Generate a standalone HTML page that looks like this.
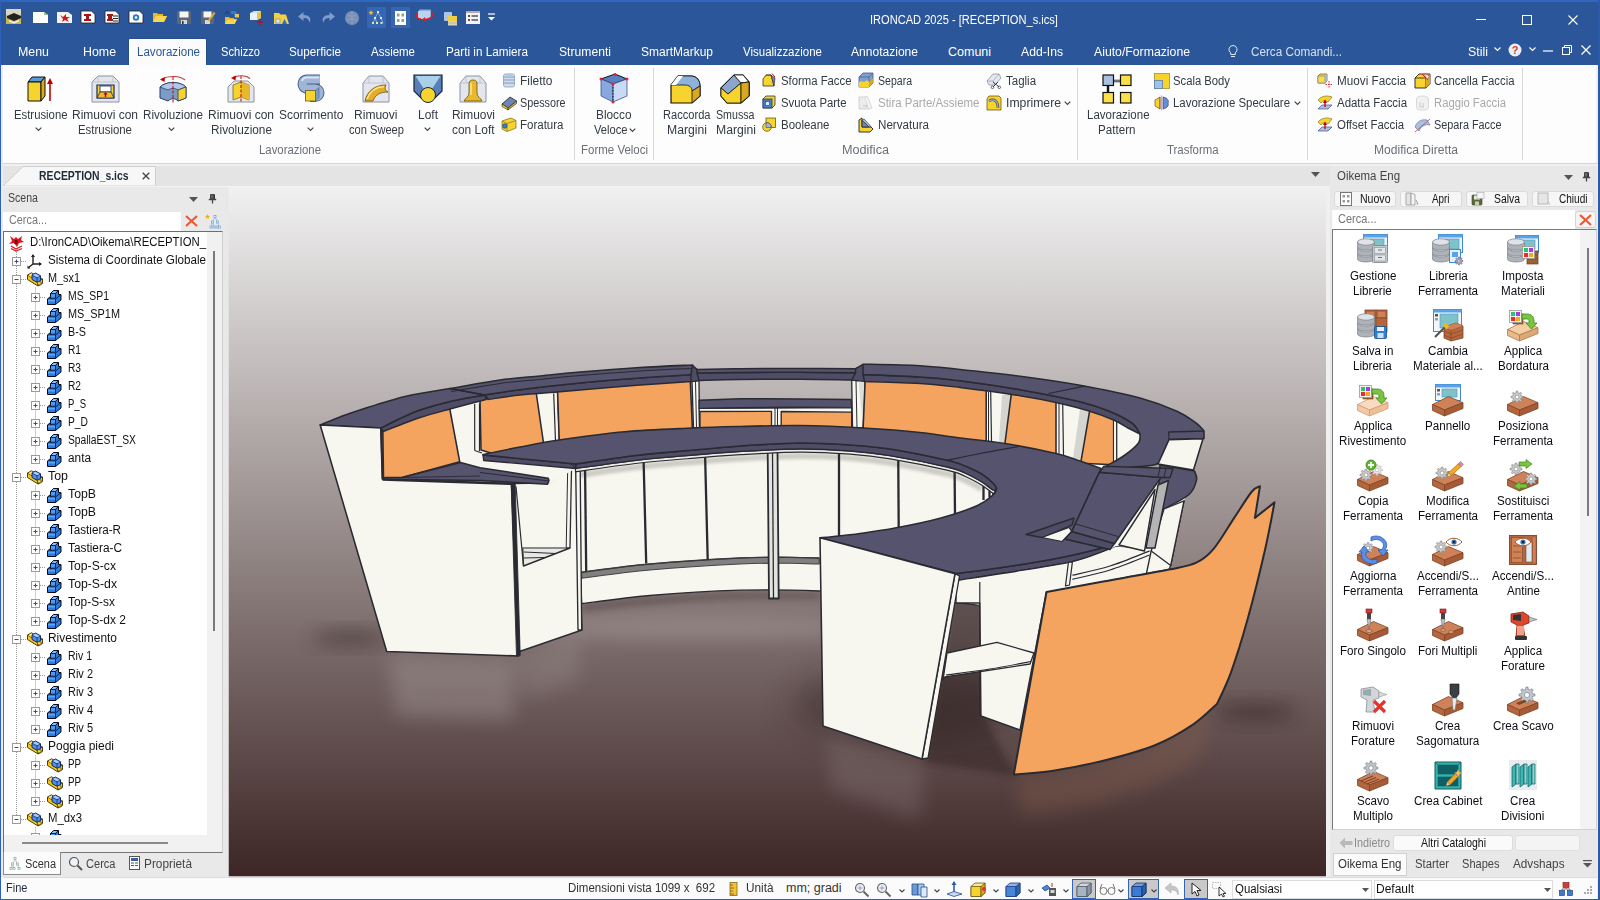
<!DOCTYPE html>
<html lang="it"><head><meta charset="utf-8"><title>IRONCAD 2025 - [RECEPTION_s.ics]</title><style>
html,body{margin:0;padding:0;}
body{width:1600px;height:900px;overflow:hidden;position:relative;background:#f0f0f0;font-family:"Liberation Sans",sans-serif;font-size:12px;}
.b{position:absolute;box-sizing:border-box;}
.t{position:absolute;white-space:pre;line-height:16px;transform-origin:0 50%;}
svg{overflow:visible;}
</style></head><body>
<!-- g_top -->
<div class="b" style="left:0px;top:0px;width:1600px;height:65px;background:#2b579a;"></div><div class="b" style="left:0px;top:0px;width:1600px;height:2px;background:#2f66c0;"></div><svg class="b" style="left:6px;top:9px;" width="15" height="15" viewBox="0 0 15 15"><rect width="15" height="15" fill="#c9b458"/><path d="M0 0H15V6L7 9 0 6Z" fill="#d9d6c6"/><path d="M1 7L8 4 15 7V9L8 12 1 9Z" fill="#222"/><path d="M3 11L8 13 13 11V12.5L8 14.5 3 12.5Z" fill="#f4f4f0"/></svg><svg class="b" style="left:32.5px;top:11.5px;" width="15" height="11" viewBox="0 0 15 11"><path d="M0 0H11L15 3V11H0Z" fill="#fff"/><path d="M11 0L15 3H11Z" fill="#9fc08a"/></svg><svg class="b" style="left:56.5px;top:11.5px;" width="15" height="11" viewBox="0 0 15 11"><path d="M0 0H11L15 3V11H0Z" fill="#f3f3f3"/><path d="M3 3L6 5 9 2 9 5 13 5 10 7 12 10 8 8 5 10 6 7Z" fill="#d2161d"/></svg><svg class="b" style="left:81px;top:11px;" width="14" height="12" viewBox="0 0 14 12"><path d="M0 0H10.5L14 3.5V12H0Z" fill="#fff" stroke="#222" stroke-width="0.8"/><path d="M3 3H10V5H8V8H10V10H3V8H5V5H3Z" fill="#a3161a"/></svg><svg class="b" style="left:104.5px;top:11px;" width="14" height="12" viewBox="0 0 14 12"><path d="M0 0H10.5L14 3.5V12H0Z" fill="#fff" stroke="#222" stroke-width="0.8"/><path d="M2 3H8V5H7V8H8V10H2V8H3V5H2Z" fill="#a3161a"/><path d="M8 5H13M8 7.5H13M8 10H13" stroke="#222" stroke-width="1.2"/></svg><svg class="b" style="left:128.5px;top:11px;" width="14" height="12" viewBox="0 0 14 12"><path d="M0 0H10.5L14 3.5V12H0Z" fill="#fff" stroke="#222" stroke-width="0.8"/><circle cx="7" cy="6.5" r="3.2" fill="#2a7bc4"/><circle cx="7" cy="6.5" r="1.3" fill="#fff"/></svg><svg class="b" style="left:152.5px;top:12px;" width="14" height="10" viewBox="0 0 14 10"><path d="M0 10V1H4L5 2H10V4H14L11 10Z" fill="#e7b928"/><path d="M0 10L3 4H14L11 10Z" fill="#f6d653"/></svg><svg class="b" style="left:177px;top:11px;" width="14" height="13" viewBox="0 0 14 13"><rect width="14" height="13" rx="1" fill="#5c6674"/><rect x="2.5" y="0.5" width="9" height="6" fill="#f4f6f8"/><rect x="4" y="9" width="6" height="4" fill="#d5d9de"/><rect x="5" y="10" width="1.6" height="3" fill="#333"/></svg><svg class="b" style="left:201px;top:11px;" width="14" height="13" viewBox="0 0 14 13"><rect width="13" height="13" rx="1" fill="#5c6674"/><rect x="2.5" y="0.5" width="8" height="6" fill="#f4f6f8"/><rect x="4" y="9" width="5" height="4" fill="#d5d9de"/><path d="M7 9L13 1 14.5 2.2 8.5 10 6.5 10.5Z" fill="#e8a93a"/></svg><svg class="b" style="left:224px;top:10px;" width="15" height="14" viewBox="0 0 15 14"><path d="M1 14V7H5L6 8H10V9H13L10.5 14Z" fill="#e7b928"/><path d="M1 14L3.5 9.5H13L10.5 14Z" fill="#f6d653"/><path d="M7 1H11L13 3V7H10V4H7Z" fill="#3b78c9"/><rect x="11" y="4" width="4" height="3.5" fill="#e6c648"/><path d="M1 4L3 1.5 5 4" fill="none" stroke="#1b3f8a" stroke-width="1.2"/></svg><svg class="b" style="left:248px;top:10px;" width="16" height="15" viewBox="0 0 16 15"><path d="M2 3L6 1H13V8L9 10H2Z" fill="#cfe3f6"/><path d="M2 3H9V10H2Z" fill="#e9f3fc"/><path d="M9 3L13 1V8L9 10Z" fill="#e5c34c"/><path d="M9 12H15M12 9V15" stroke="#b2122a" stroke-width="1.3"/></svg><svg class="b" style="left:274px;top:11px;" width="15" height="13" viewBox="0 0 15 13"><path d="M0 13V2H5L6.5 3.5H12L15 13Z" fill="#f3d13f"/><rect x="2" y="8" width="4" height="4" fill="#dfe6f4" stroke="#7286ad" stroke-width="0.6"/><path d="M8 13L10.5 8 13 13Z" fill="#2a6fd1"/></svg><svg class="b" style="left:298px;top:12px;" width="14" height="11" viewBox="0 0 14 11"><path d="M5.5 0L0 4.5 5.5 9V6C9 6 11 7 11.5 11 14 6 11 3 5.5 3Z" fill="#7f9ccb"/></svg><svg class="b" style="left:320.5px;top:12px;" width="14" height="11" viewBox="0 0 14 11"><path d="M8.500 0L14 4.5 8.500 9V6C5 6 3 7 2.500 11 0 6 3 3 8.500 3Z" fill="#7f9ccb"/></svg><svg class="b" style="left:345px;top:10.5px;" width="14" height="14" viewBox="0 0 14 14"><circle cx="7" cy="7" r="7" fill="#7a8fb5"/><path d="M3 4Q7 7 11 4M2 9Q7 6 12 9M7 0V14" stroke="#8fa3c6" stroke-width="0.8" fill="none"/></svg><div class="b" style="left:367px;top:7px;width:19px;height:21px;background:#3566b3;"></div><svg class="b" style="left:369px;top:10px;" width="16" height="15" viewBox="0 0 16 15"><path d="M2 0L2.700 1.800 4.500 2 3.100 3.200 3.500 5 2 4 0.500 5 0.900 3.200 -0.500 2 1.300 1.800Z" fill="#f0c23a"/><path d="M9 2.500L6 8M9 2.500L12 8M6 8L4 13M6 8L8 13M12 8L14 13" stroke="#9fc3ec" stroke-width="0.7"/><rect x="8" y="1" width="2" height="2" fill="#dbeaf9"/><rect x="5" y="7" width="2" height="2" fill="#dbeaf9"/><rect x="11" y="7" width="2" height="2" fill="#dbeaf9"/><rect x="3" y="12" width="2" height="2" fill="#f0e68a"/><rect x="7" y="12" width="2" height="2" fill="#f0e68a"/><rect x="11.500" y="12" width="2" height="2" fill="#f0e68a"/></svg><div class="b" style="left:391px;top:7px;width:19px;height:21px;background:#3566b3;"></div><svg class="b" style="left:394.5px;top:10.5px;" width="11" height="14" viewBox="0 0 11 14"><rect width="11" height="14" fill="#fdfdfd"/><rect x="2" y="2.500" width="2.500" height="3" fill="#9a9a9a"/><rect x="6.500" y="2.500" width="2.500" height="3" fill="#9a9a9a"/><rect x="2" y="8" width="2.500" height="3" fill="#9a9a9a"/><rect x="6.500" y="8" width="2.500" height="3" fill="#9a9a9a"/></svg><svg class="b" style="left:416px;top:9px;" width="17" height="13" viewBox="0 0 17 13"><rect x="3" y="0.500" width="12" height="9" rx="1" fill="#8fb0d8"/><rect x="2" y="2" width="12" height="8" fill="#bcd3ee"/><path d="M1 4C-1 8 2 10 5 10M16 4C18 7 14 10.500 8 10.500" stroke="#e01b24" stroke-width="1.400" fill="none"/><path d="M9 8L6 10.500 9 13Z" fill="#e01b24"/></svg><svg class="b" style="left:444px;top:11.5px;" width="13" height="14" viewBox="0 0 13 14"><rect x="0" y="0" width="8" height="9" rx="1" fill="#a9c6e8"/><rect x="4" y="4" width="9" height="5" fill="#f0cf45"/><rect x="4" y="9" width="9" height="4.500" fill="#d9d4c0"/><path d="M4 11H13" stroke="#b4ad92" stroke-width="0.700"/></svg><svg class="b" style="left:465.5px;top:10.5px;" width="14" height="13" viewBox="0 0 14 13"><rect width="14" height="13" fill="#f4f4f4"/><rect width="14" height="2" fill="#b9a9a9"/><rect x="2" y="4" width="2" height="2" fill="#555"/><rect x="2" y="8" width="2" height="2" fill="#555"/><path d="M5.500 5H12M5.500 9H12" stroke="#555" stroke-width="1.300"/></svg><svg class="b" style="left:488px;top:14px;" width="7" height="7" viewBox="0 0 7 7"><path d="M0 0H7" stroke="#fff" stroke-width="1.200"/><path d="M0 3H7L3.500 6.500Z" fill="#fff"/></svg><span class="t" style="left:870.0px;top:11.7px;font-size:12.5px;color:#fff;transform:scaleX(0.887);">IRONCAD 2025 - [RECEPTION_s.ics]</span><svg class="b" style="left:1475px;top:13px;" width="12" height="12" viewBox="0 0 12 12"><path d="M1 6.500H11" stroke="#fff" stroke-width="1"/></svg><svg class="b" style="left:1521px;top:14px;" width="12" height="12" viewBox="0 0 12 12"><rect x="1.500" y="1.500" width="9" height="9" fill="none" stroke="#fff" stroke-width="1"/></svg><svg class="b" style="left:1567px;top:14px;" width="12" height="12" viewBox="0 0 12 12"><path d="M1.500 1.500L10.500 10.500M10.500 1.500L1.500 10.500" stroke="#fff" stroke-width="1.100"/></svg><div class="b" style="left:129px;top:39px;width:77px;height:27px;background:#fbfbfb;border-radius:1px 1px 0 0;box-shadow:0 0 2px rgba(0,0,0,.35);"></div><span class="t" style="left:18.0px;top:44.0px;font-size:12.5px;color:#fff;transform:scaleX(0.992);">Menu</span><span class="t" style="left:83.0px;top:44.0px;font-size:12.5px;color:#fff;transform:scaleX(0.990);">Home</span><span class="t" style="left:137.0px;top:44.0px;font-size:12.5px;color:#2b579a;transform:scaleX(0.925);">Lavorazione</span><span class="t" style="left:221.0px;top:44.0px;font-size:12.5px;color:#fff;transform:scaleX(0.891);">Schizzo</span><span class="t" style="left:289.0px;top:44.0px;font-size:12.5px;color:#fff;transform:scaleX(0.936);">Superficie</span><span class="t" style="left:371.0px;top:44.0px;font-size:12.5px;color:#fff;transform:scaleX(0.918);">Assieme</span><span class="t" style="left:446.0px;top:44.0px;font-size:12.5px;color:#fff;transform:scaleX(0.937);">Parti in Lamiera</span><span class="t" style="left:559.0px;top:44.0px;font-size:12.5px;color:#fff;transform:scaleX(0.972);">Strumenti</span><span class="t" style="left:641.0px;top:44.0px;font-size:12.5px;color:#fff;transform:scaleX(0.960);">SmartMarkup</span><span class="t" style="left:743.0px;top:44.0px;font-size:12.5px;color:#fff;transform:scaleX(0.919);">Visualizzazione</span><span class="t" style="left:851.0px;top:44.0px;font-size:12.5px;color:#fff;transform:scaleX(0.964);">Annotazione</span><span class="t" style="left:948.0px;top:44.0px;font-size:12.5px;color:#fff;">Comuni</span><span class="t" style="left:1021.0px;top:44.0px;font-size:12.5px;color:#fff;transform:scaleX(0.975);">Add-Ins</span><span class="t" style="left:1094.0px;top:44.0px;font-size:12.5px;color:#fff;transform:scaleX(0.980);">Aiuto/Formazione</span><svg class="b" style="left:1227px;top:44px;" width="12" height="15" viewBox="0 0 12 15"><path d="M6 1.500A4 4 0 0 1 8.300 8.800V10.500H3.700V8.800A4 4 0 0 1 6 1.500Z" fill="none" stroke="#dfe8f5" stroke-width="1"/><path d="M4 12.500H8" stroke="#dfe8f5" stroke-width="1"/></svg><span class="t" style="left:1251.0px;top:44.0px;font-size:12.5px;color:#d5e0f2;transform:scaleX(0.936);">Cerca Comandi...</span><span class="t" style="left:1468.0px;top:44.0px;font-size:12.5px;color:#fff;transform:scaleX(0.993);">Stili</span><svg class="b" style="left:1494px;top:47px;" width="7" height="5" viewBox="0 0 7 5"><path d="M0.500 0.500L3.500 3.500 6.500 0.500" stroke="#fff" stroke-width="1.200" fill="none"/></svg><svg class="b" style="left:1508px;top:43px;" width="14" height="14" viewBox="0 0 14 14"><circle cx="7" cy="7" r="6.500" fill="#e9eef7"/><text x="7" y="10.800" font-size="11" font-weight="bold" fill="#e5352b" text-anchor="middle" font-family="Liberation Sans, sans-serif">?</text></svg><svg class="b" style="left:1529px;top:47px;" width="7" height="5" viewBox="0 0 7 5"><path d="M0.500 0.500L3.500 3.500 6.500 0.500" stroke="#fff" stroke-width="1.200" fill="none"/></svg><svg class="b" style="left:1543px;top:46px;" width="10" height="10" viewBox="0 0 10 10"><path d="M0 5H10" stroke="#fff" stroke-width="1.200"/></svg><svg class="b" style="left:1562px;top:45px;" width="11" height="11" viewBox="0 0 11 11"><rect x="0.500" y="2.500" width="7" height="7" fill="none" stroke="#fff" stroke-width="1"/><path d="M2.500 2.500V0.500H9.500V7.500H7.500" fill="none" stroke="#fff" stroke-width="1"/></svg><svg class="b" style="left:1581px;top:45px;" width="10" height="10" viewBox="0 0 10 10"><path d="M0.500 0.500L9.500 9.500M9.500 0.500L0.500 9.500" stroke="#fff" stroke-width="1.300"/></svg>
<!-- g_ribbon -->
<div class="b" style="left:3px;top:65px;width:1593px;height:98px;background:#fdfdfd;"></div><div class="b" style="left:3px;top:163px;width:1594px;height:1px;background:#d4d4d4;"></div><div class="b" style="left:574px;top:68px;width:1px;height:92px;background:#d8d8d8;"></div><div class="b" style="left:653px;top:68px;width:1px;height:92px;background:#d8d8d8;"></div><div class="b" style="left:1077px;top:68px;width:1px;height:92px;background:#d8d8d8;"></div><div class="b" style="left:1307px;top:68px;width:1px;height:92px;background:#d8d8d8;"></div><div class="b" style="left:1522px;top:68px;width:1px;height:92px;background:#d8d8d8;"></div><svg class="b" style="left:27px;top:76px;" width="26" height="26" viewBox="0 0 26 26"><path d="M1 6L5 1H18L14 6Z" fill="#5b9bd5" stroke="#111" stroke-width="1"/><path d="M1 6H14V25H1Z" fill="#f6d32d" stroke="#111" stroke-width="1"/><path d="M14 6L18 1V20L14 25Z" fill="#d9a820" stroke="#111" stroke-width="1"/><path d="M23 25V6" stroke="#c00000" stroke-width="1.600"/><path d="M20 8L23 2 26 8Z" fill="#c00000"/></svg><svg class="b" style="left:91px;top:75px;" width="29" height="28" viewBox="0 0 29 28"><path d="M1 27V7L7 1H22L28 7V27Z" fill="#e3e6ee" stroke="#8d929c" stroke-width="1"/><path d="M1 7H28M7 1V7M22 1V7" stroke="#b7bcc6" stroke-width="0.800"/><path d="M6 23V10H23V23Z" fill="#f6d32d" stroke="#1a2a55" stroke-width="1.200"/><rect x="9" y="11" width="11" height="6" fill="#fff" stroke="#1a2a55" stroke-width="0.800"/><path d="M6 23L9 17H20L23 23Z" fill="#f3b928" stroke="#1a2a55" stroke-width="0.800"/><path d="M14.500 22V18" stroke="#c00000" stroke-width="1.400"/><path d="M12.500 19.500L14.500 17 16.500 19.500Z" fill="#c00000"/></svg><svg class="b" style="left:158px;top:76px;" width="30" height="27" viewBox="0 0 30 27"><path d="M2 11C8 5 22 5 28 11V22L20 25C17 22 13 22 10 25L2 22Z" fill="#7c9cc6" stroke="#2a3d66" stroke-width="1"/><path d="M2 11C8 5 22 5 28 11L20 14C17 12 13 12 10 14Z" fill="#b3c8e6" stroke="#2a3d66" stroke-width="0.800"/><path d="M20 14L28 11V22L20 25Z" fill="#f6d32d" stroke="#2a3d66" stroke-width="0.800"/><path d="M15 1V27" stroke="#c00000" stroke-width="1" stroke-dasharray="3 1.500"/><path d="M27 4C22 -0.500 10 -0.500 4 3" fill="none" stroke="#c03a3a" stroke-width="1.200"/><path d="M2 3.500L7 1 6.500 6Z" fill="#c00000"/></svg><svg class="b" style="left:227px;top:75px;" width="28" height="28" viewBox="0 0 28 28"><path d="M1 27V12L7 6H21L27 12V27Z" fill="#e3e6ee" stroke="#8d929c" stroke-width="1"/><path d="M6 25V10L14 7 22 10V25L14 22Z" fill="#f6d32d" stroke="#7a6a20" stroke-width="0.800"/><path d="M14 7L22 10V25L14 22Z" fill="#e6b82c"/><path d="M14 1V27" stroke="#c00000" stroke-width="1" stroke-dasharray="3 1.500"/><path d="M23 3.500C19 0 11 0 6 2.500" fill="none" stroke="#c03a3a" stroke-width="1.200"/><path d="M4 3L9 0.500 8.500 5.500Z" fill="#c00000"/></svg><svg class="b" style="left:296px;top:74px;" width="30" height="29" viewBox="0 0 30 29"><path d="M24 5.500H11C5 5.500 5 14.500 11 14.500H19C25 14.500 25 23 19 23H14" fill="none" stroke="#4a5f86" stroke-width="10" stroke-linejoin="round"/><path d="M24 5.500H11C5 5.500 5 14.500 11 14.500H19C25 14.500 25 23 19 23H14" fill="none" stroke="#9fb6d8" stroke-width="8" stroke-linejoin="round"/><path d="M23 3.500H11C8 3.500 6.500 5 6 7" fill="none" stroke="#d7e2f2" stroke-width="2"/><rect x="9.500" y="16.500" width="10" height="10.500" fill="#f6d32d" stroke="#6a5a1a" stroke-width="0.800"/><path d="M19.500 16.500L23 13.500V23.500L19.500 27Z" fill="#7c9cc6" stroke="#4a5f86" stroke-width="0.600"/></svg><svg class="b" style="left:362px;top:75px;" width="28" height="28" viewBox="0 0 28 28"><path d="M1 27V8L7 1H21L27 8V27Z" fill="#e3e6ee" stroke="#8d929c" stroke-width="1"/><path d="M1 8H27M7 1V8M21 1V8" stroke="#b7bcc6" stroke-width="0.800"/><path d="M3 26C5 16 13 10 24 10C22 14 24 16 26 17C18 17 13 20 11 26Z" fill="#e3ad2a" stroke="#6a5210" stroke-width="0.800"/><path d="M5 24C8 16 14 12 22 11.500" stroke="#fbe48a" stroke-width="1.500" fill="none"/></svg><svg class="b" style="left:413px;top:74px;" width="30" height="29" viewBox="0 0 30 29"><path d="M1 1H29V17L22 24H8L1 17Z" fill="#5a7fb8" stroke="#14233f" stroke-width="1.200"/><path d="M2.500 2H27.500L19 15H11Z" fill="#a9d0ea"/><circle cx="15" cy="21" r="7.500" fill="#f6d32d" stroke="#14233f" stroke-width="1"/></svg><svg class="b" style="left:459px;top:75px;" width="28" height="28" viewBox="0 0 28 28"><path d="M1 27V8L7 1H21L27 8V27Z" fill="#e3e6ee" stroke="#8d929c" stroke-width="1"/><path d="M1 8H27M7 1V8M21 1V8" stroke="#b7bcc6" stroke-width="0.800"/><path d="M10 8C10 4 18 4 18 8V18C18 22 22 23 23 26H5C6 23 10 22 10 18Z" fill="#e8b92e" stroke="#6a5210" stroke-width="0.800"/><path d="M12 8V20" stroke="#fbe48a" stroke-width="1.600"/></svg><svg class="b" style="left:599px;top:73px;" width="30" height="31" viewBox="0 0 30 31"><path d="M2 6L16 1 28 6 14 11Z" fill="#5c7fc2" stroke="#111" stroke-width="1"/><path d="M2 6L14 11V29L2 23Z" fill="#89a8e0" stroke="#3b5590" stroke-width="0.800"/><path d="M14 11L28 6V23L14 29Z" fill="#c9daf5" stroke="#3b5590" stroke-width="0.800"/><path d="M14 11V29" stroke="#111" stroke-width="1" stroke-dasharray="1.500 1.500"/><circle cx="2" cy="6" r="1.500" fill="#e8212b"/><circle cx="16" cy="1.500" r="1.500" fill="#e8212b"/><circle cx="28" cy="6" r="1.500" fill="#e8212b"/><circle cx="14" cy="11" r="1.500" fill="#e8212b"/><circle cx="14" cy="29" r="1.500" fill="#e8212b"/></svg><svg class="b" style="left:670px;top:74px;" width="31" height="30" viewBox="0 0 31 30"><path d="M1 11L8 2H21C27 2 30 7 30 12V22L22 29H1Z" fill="#f6d32d" stroke="#111" stroke-width="1.200"/><path d="M8 2H21C27 2 30 7 30 12L22 17C22 13 19 11 15 11H1Z" fill="#8fb2dc" stroke="#111" stroke-width="0.800"/><path d="M8 2L13 2 6 11 1 11Z" fill="#fff"/><path d="M22 17L30 12V22L22 29Z" fill="#d9a820" stroke="#111" stroke-width="0.800"/></svg><svg class="b" style="left:720px;top:74px;" width="30" height="30" viewBox="0 0 30 30"><path d="M1 14L14 1H23L29 8V22L21 29H7L1 22Z" fill="#f6d32d" stroke="#111" stroke-width="1.200"/><path d="M1 14L14 1 21 9 8 20Z" fill="#8aa6cf" stroke="#111" stroke-width="0.800"/><path d="M14 1H23L29 8 21 9Z" fill="#fff" stroke="#111" stroke-width="0.800"/><path d="M8 20L21 9 29 8V22L21 29H7L1 22 1 14Z" fill="#f6d32d" stroke="#111" stroke-width="0.800"/><path d="M21 9V29" stroke="#111" stroke-width="0.800"/><path d="M21 9L29 8V22L21 29Z" fill="#d9a820" stroke="#111" stroke-width="0.800"/></svg><svg class="b" style="left:1102px;top:74px;" width="30" height="30" viewBox="0 0 30 30"><path d="M6 11V19M11 7H19" stroke="#111" stroke-width="2.400"/><path d="M11 7H19" stroke="#fff" stroke-width="0.800"/><rect x="1" y="1" width="10.500" height="10.500" fill="#a9c0e0" stroke="#111" stroke-width="1.200"/><rect x="18.500" y="1" width="10.500" height="10.500" fill="#fbe04a" stroke="#111" stroke-width="1.200"/><rect x="1" y="18.500" width="10.500" height="10.500" fill="#fbe04a" stroke="#111" stroke-width="1.200"/><rect x="18.500" y="18.500" width="10.500" height="10.500" fill="#fbe04a" stroke="#111" stroke-width="1.200"/></svg><svg class="b" style="left:503px;top:73px;" width="12" height="15" viewBox="0 0 12 15"><rect x="0.500" y="1" width="11" height="13" rx="2" fill="#cfdcee" stroke="#8aa0c0" stroke-width="0.800"/><path d="M0.500 4H11.500M0.500 7H11.500M0.500 10H11.500" stroke="#7f95b8" stroke-width="0.900"/><rect x="3" y="0.500" width="6" height="3" fill="#b7c7e0"/></svg><svg class="b" style="left:501px;top:96px;" width="16" height="14" viewBox="0 0 16 14"><path d="M1 8L9 1 15.500 5 7 12Z" fill="#6a86b8" stroke="#222" stroke-width="0.800"/><path d="M1 8L7 12V14L1 10.500Z" fill="#f6d32d" stroke="#222" stroke-width="0.600"/><path d="M7 12L15.500 5V7.500L7 14Z" fill="#d9a820" stroke="#222" stroke-width="0.600"/></svg><svg class="b" style="left:501px;top:117px;" width="16" height="15" viewBox="0 0 16 15"><path d="M1 4L10 1 15 3.500V11L6 14.500 1 12Z" fill="#f6d32d" stroke="#8a7420" stroke-width="0.800"/><path d="M1 4L6 6.500 15 3.500M6 6.500V14.500" stroke="#8a7420" stroke-width="0.700" fill="none"/><circle cx="3.800" cy="9" r="2.300" fill="#3b78d0" stroke="#1d3e7a" stroke-width="0.600"/></svg><svg class="b" style="left:762px;top:73px;" width="14" height="15" viewBox="0 0 14 15"><path d="M1 6L4 2H9L12 13H1Z" fill="#f6d32d" stroke="#333" stroke-width="0.800"/><path d="M4 2H9L13 5 12 13 9 2" fill="#6a86b8" stroke="#333" stroke-width="0.700"/><path d="M10 0.500L13 4" stroke="#d2161d" stroke-width="1"/></svg><svg class="b" style="left:762px;top:95px;" width="14" height="14" viewBox="0 0 14 14"><path d="M1 4L4 1H13V10L10 13H1Z" fill="#f6d32d" stroke="#333" stroke-width="0.800"/><rect x="1" y="4" width="9" height="9" fill="#4a7cc4" stroke="#1d3e7a" stroke-width="0.800"/><rect x="3.500" y="6.500" width="4" height="4" fill="#dce8f8" stroke="#1d3e7a" stroke-width="0.600"/></svg><svg class="b" style="left:762px;top:117px;" width="14" height="15" viewBox="0 0 14 15"><rect x="4" y="1" width="9.500" height="9.500" fill="#f6d32d" stroke="#6a5a1a" stroke-width="0.800"/><circle cx="5" cy="10" r="4.300" fill="#f6d32d" stroke="#6a5a1a" stroke-width="0.800"/><path d="M4 5.800V10.500H9.200A4.300 4.300 0 0 0 4 5.800Z" fill="#9fb6d8" stroke="#445" stroke-width="0.600"/></svg><svg class="b" style="left:858px;top:72px;" width="16" height="16" viewBox="0 0 16 16"><path d="M1 5L5 1H15V11L11 15H1Z" fill="#7f9fd0" stroke="#445c8a" stroke-width="0.800"/><path d="M1 5H11V15M11 5L15 1" stroke="#445c8a" stroke-width="0.700" fill="none"/><path d="M1 10C3 8 5 11 7 9.500S10 8.500 11 10V15H1Z" fill="#f6d32d"/><path d="M11 10L15 6V11L11 15Z" fill="#d9a820"/></svg><svg class="b" style="left:858px;top:95px;" width="15" height="15" viewBox="0 0 15 15"><path d="M1 14V2H7L11 14Z" fill="#ececec" stroke="#c9c9c9" stroke-width="0.800"/><path d="M7 2L9 1 14 13 11 14" fill="#f4f4f4" stroke="#cfcfcf" stroke-width="0.800"/><path d="M5 11H9M8 9.500L9.500 11 8 12.500" stroke="#c2c2c2" stroke-width="0.800" fill="none"/></svg><svg class="b" style="left:858px;top:117px;" width="16" height="16" viewBox="0 0 16 16"><path d="M1 3L4 1V10H13L15 12 12 15H1Z" fill="#f6d32d" stroke="#222" stroke-width="0.900"/><path d="M4 3L11 10H4Z" fill="#6a86b8" stroke="#222" stroke-width="0.800"/><path d="M4 3L6 2 13 9.500 11 10Z" fill="#a9c0e0" stroke="#222" stroke-width="0.600"/></svg><svg class="b" style="left:986px;top:73px;" width="16" height="16" viewBox="0 0 16 16"><path d="M1 8L7 1H13L15 5 9 12H3Z" fill="#e4e8f0" stroke="#8d929c" stroke-width="0.800"/><path d="M1 8H7L13 1M7 8L9 12" stroke="#9aa0ac" stroke-width="0.700" fill="none"/><path d="M7 9L13 14M12 9L7 14" stroke="#333" stroke-width="0.900"/><circle cx="6.500" cy="14.300" r="1.300" fill="none" stroke="#333" stroke-width="0.700"/><circle cx="13.300" cy="14.300" r="1.300" fill="none" stroke="#333" stroke-width="0.700"/></svg><svg class="b" style="left:986px;top:95px;" width="16" height="16" viewBox="0 0 16 16"><path d="M1 4L3 1H13L15 3V15H1Z" fill="#f6d32d" stroke="#6a5a1a" stroke-width="0.800"/><path d="M3 6C8 3 12 6 12 13" stroke="#444" stroke-width="2.600" fill="none"/><path d="M3 6C8 3 12 6 12 13" stroke="#9fb6d8" stroke-width="1.200" fill="none"/></svg><svg class="b" style="left:1154px;top:73px;" width="16" height="16" viewBox="0 0 16 16"><rect x="0.500" y="0.500" width="15" height="15" fill="#f6d32d" stroke="#a89030" stroke-width="0.800"/><rect x="0.500" y="7.500" width="8" height="8" fill="#9fc3e6" stroke="#5a7fb0" stroke-width="0.800"/></svg><svg class="b" style="left:1154px;top:95px;" width="16" height="16" viewBox="0 0 16 16"><path d="M1 5L6 2V14L1 11Z" fill="#f6d32d" stroke="#6a5a1a" stroke-width="0.700"/><path d="M6 2V14" stroke="#6a5a1a" stroke-width="0.700"/><path d="M9 2C14 3 15 6 14 8 15 11 13 13 9 14Z" fill="#6a8fd0" stroke="#2a447a" stroke-width="0.700"/><path d="M7.500 0.500V15.500" stroke="#e39ad0" stroke-width="1.400"/></svg><svg class="b" style="left:1317px;top:73px;" width="16" height="16" viewBox="0 0 16 16"><path d="M1 3L3 1H10V8L8 10H1Z" fill="#f6d32d" stroke="#6a6a6a" stroke-width="0.800"/><rect x="1" y="3" width="7" height="7" fill="#f7dc55" stroke="#777" stroke-width="0.600"/><path d="M9 3L10 1V8L8 10V3Z" fill="#9fb6d8"/><path d="M12 8V15M8.500 11.500H15.500" stroke="#d2161d" stroke-width="0.900" stroke-dasharray="1.500 1"/></svg><svg class="b" style="left:1317px;top:95px;" width="16" height="16" viewBox="0 0 16 16"><path d="M1 5C4 1 10 0 15 2L11 7C8 5 5 6 4 8Z" fill="#f6d32d" stroke="#8a7420" stroke-width="0.700"/><path d="M1 14L5 10H15L11 14Z" fill="#a9bfe4" stroke="#3b5590" stroke-width="0.700"/><path d="M8 12V6" stroke="#c00000" stroke-width="1.300"/><path d="M6 8L8 4.500 10 8Z" fill="#c00000"/></svg><svg class="b" style="left:1317px;top:117px;" width="16" height="16" viewBox="0 0 16 16"><path d="M1 5C4 1 10 0 15 2L11 7C8 5 5 6 4 8Z" fill="#f6d32d" stroke="#8a7420" stroke-width="0.700"/><path d="M1 14L5 10H15L11 14Z" fill="#a9bfe4" stroke="#3b5590" stroke-width="0.700"/><path d="M8 12V6" stroke="#c00000" stroke-width="1.300"/><path d="M6 8L8 4.500 10 8Z" fill="#c00000"/></svg><svg class="b" style="left:1414px;top:73px;" width="17" height="16" viewBox="0 0 17 16"><path d="M1 5L5 1H16V11L12 15H1Z" fill="#f6d32d" stroke="#222" stroke-width="0.900"/><path d="M1 5H12V15M12 5L16 1" stroke="#222" stroke-width="0.800" fill="none"/><path d="M12 5L16 1V11L12 15Z" fill="#d9a820"/><path d="M8 1L14 7" stroke="#d2161d" stroke-width="0.900"/><path d="M10 0.500L15.500 3 13 6.500Z" fill="#f0f0f0" stroke="#a33" stroke-width="0.500"/></svg><svg class="b" style="left:1415px;top:95px;" width="15" height="16" viewBox="0 0 15 16"><ellipse cx="7.500" cy="3.500" rx="6" ry="2.500" fill="#f1f1f1" stroke="#cfcfcf" stroke-width="0.800"/><path d="M1.500 3.500V12.500C1.500 16 13.500 16 13.500 12.500V3.500" fill="#f1f1f1" stroke="#cfcfcf" stroke-width="0.800"/><path d="M5 7V12H9M8 8V12" stroke="#c8c8c8" stroke-width="0.900" fill="none"/></svg><svg class="b" style="left:1414px;top:117px;" width="17" height="16" viewBox="0 0 17 16"><path d="M1 10C3 4 8 2 13 3L16 8C11 7 7 9 5 14Z" fill="#a9bfe4" stroke="#6a7f9f" stroke-width="0.700"/><path d="M1 15L16 2" stroke="#d84a5a" stroke-width="0.900"/></svg><span class="t" style="left:13.5px;top:106.7px;font-size:12.5px;color:#333a44;transform:scaleX(0.906);">Estrusione</span><svg class="b" style="left:35.3px;top:127px;" width="7" height="5" viewBox="0 0 7 5"><path d="M0.700 0.700L3.500 3.500 6.300 0.700" stroke="#444" stroke-width="1.200" fill="none"/></svg><span class="t" style="left:72.0px;top:106.7px;font-size:12.5px;color:#333a44;transform:scaleX(0.960);">Rimuovi con</span><span class="t" style="left:78.0px;top:121.7px;font-size:12.5px;color:#333a44;transform:scaleX(0.914);">Estrusione</span><span class="t" style="left:143.0px;top:106.7px;font-size:12.5px;color:#333a44;transform:scaleX(0.929);">Rivoluzione</span><svg class="b" style="left:168.3px;top:127px;" width="7" height="5" viewBox="0 0 7 5"><path d="M0.700 0.700L3.500 3.500 6.300 0.700" stroke="#444" stroke-width="1.200" fill="none"/></svg><span class="t" style="left:208.0px;top:106.7px;font-size:12.5px;color:#333a44;transform:scaleX(0.960);">Rimuovi con</span><span class="t" style="left:211.0px;top:121.7px;font-size:12.5px;color:#333a44;transform:scaleX(0.944);">Rivoluzione</span><span class="t" style="left:279.0px;top:106.7px;font-size:12.5px;color:#333a44;transform:scaleX(0.957);">Scorrimento</span><svg class="b" style="left:306.5px;top:127px;" width="7" height="5" viewBox="0 0 7 5"><path d="M0.700 0.700L3.500 3.500 6.300 0.700" stroke="#444" stroke-width="1.200" fill="none"/></svg><span class="t" style="left:354.0px;top:106.7px;font-size:12.5px;color:#333a44;transform:scaleX(0.964);">Rimuovi</span><span class="t" style="left:349.0px;top:121.7px;font-size:12.5px;color:#333a44;transform:scaleX(0.889);">con Sweep</span><span class="t" style="left:417.5px;top:106.7px;font-size:12.5px;color:#333a44;transform:scaleX(0.959);">Loft</span><svg class="b" style="left:423.5px;top:127px;" width="7" height="5" viewBox="0 0 7 5"><path d="M0.700 0.700L3.500 3.500 6.300 0.700" stroke="#444" stroke-width="1.200" fill="none"/></svg><span class="t" style="left:451.5px;top:106.7px;font-size:12.5px;color:#333a44;transform:scaleX(0.952);">Rimuovi</span><span class="t" style="left:452.0px;top:121.7px;font-size:12.5px;color:#333a44;transform:scaleX(0.956);">con Loft</span><span class="t" style="left:520.0px;top:72.7px;font-size:12.5px;color:#333a44;transform:scaleX(0.955);">Filetto</span><span class="t" style="left:520.0px;top:94.7px;font-size:12.5px;color:#333a44;transform:scaleX(0.862);">Spessore</span><span class="t" style="left:520.0px;top:116.7px;font-size:12.5px;color:#333a44;transform:scaleX(0.921);">Foratura</span><span class="t" style="left:258.5px;top:141.7px;font-size:12.5px;color:#6a6f76;transform:scaleX(0.910);">Lavorazione</span><span class="t" style="left:596.0px;top:106.7px;font-size:12.5px;color:#333a44;transform:scaleX(0.946);">Blocco</span><span class="t" style="left:593.5px;top:121.7px;font-size:12.5px;color:#333a44;transform:scaleX(0.893);">Veloce</span><svg class="b" style="left:628.5px;top:128px;" width="7" height="5" viewBox="0 0 7 5"><path d="M0.700 0.700L3.500 3.500 6.300 0.700" stroke="#444" stroke-width="1.200" fill="none"/></svg><span class="t" style="left:580.5px;top:141.7px;font-size:12.5px;color:#6a6f76;transform:scaleX(0.919);">Forme Veloci</span><span class="t" style="left:662.5px;top:106.7px;font-size:12.5px;color:#333a44;transform:scaleX(0.888);">Raccorda</span><span class="t" style="left:666.5px;top:121.7px;font-size:12.5px;color:#333a44;transform:scaleX(0.976);">Margini</span><span class="t" style="left:715.5px;top:106.7px;font-size:12.5px;color:#333a44;transform:scaleX(0.853);">Smussa</span><span class="t" style="left:715.5px;top:121.7px;font-size:12.5px;color:#333a44;transform:scaleX(0.976);">Margini</span><span class="t" style="left:780.5px;top:72.7px;font-size:12.5px;color:#333a44;transform:scaleX(0.906);">Sforma Facce</span><span class="t" style="left:780.5px;top:94.7px;font-size:12.5px;color:#333a44;transform:scaleX(0.906);">Svuota Parte</span><span class="t" style="left:780.5px;top:116.7px;font-size:12.5px;color:#333a44;transform:scaleX(0.918);">Booleane</span><span class="t" style="left:877.5px;top:72.7px;font-size:12.5px;color:#333a44;transform:scaleX(0.844);">Separa</span><span class="t" style="left:877.5px;top:94.7px;font-size:12.5px;color:#a9a9a9;transform:scaleX(0.919);">Stira Parte/Assieme</span><span class="t" style="left:877.5px;top:116.7px;font-size:12.5px;color:#333a44;transform:scaleX(0.929);">Nervatura</span><span class="t" style="left:1005.5px;top:72.7px;font-size:12.5px;color:#333a44;transform:scaleX(0.919);">Taglia</span><span class="t" style="left:1005.5px;top:94.7px;font-size:12.5px;color:#333a44;transform:scaleX(0.978);">Imprimere</span><svg class="b" style="left:1063.5px;top:101px;" width="7" height="5" viewBox="0 0 7 5"><path d="M0.700 0.700L3.500 3.500 6.300 0.700" stroke="#444" stroke-width="1.200" fill="none"/></svg><span class="t" style="left:842.0px;top:141.7px;font-size:12.5px;color:#6a6f76;transform:scaleX(1.010);">Modifica</span><span class="t" style="left:1086.5px;top:106.7px;font-size:12.5px;color:#333a44;transform:scaleX(0.918);">Lavorazione</span><span class="t" style="left:1098.0px;top:121.7px;font-size:12.5px;color:#333a44;transform:scaleX(0.931);">Pattern</span><span class="t" style="left:1173.0px;top:72.7px;font-size:12.5px;color:#333a44;transform:scaleX(0.901);">Scala Body</span><span class="t" style="left:1173.0px;top:94.7px;font-size:12.5px;color:#333a44;transform:scaleX(0.915);">Lavorazione Speculare</span><svg class="b" style="left:1293.5px;top:101px;" width="7" height="5" viewBox="0 0 7 5"><path d="M0.700 0.700L3.500 3.500 6.300 0.700" stroke="#444" stroke-width="1.200" fill="none"/></svg><span class="t" style="left:1167.0px;top:141.7px;font-size:12.5px;color:#6a6f76;transform:scaleX(0.912);">Trasforma</span><span class="t" style="left:1336.5px;top:72.7px;font-size:12.5px;color:#333a44;transform:scaleX(0.937);">Muovi Faccia</span><span class="t" style="left:1336.5px;top:94.7px;font-size:12.5px;color:#333a44;transform:scaleX(0.916);">Adatta Faccia</span><span class="t" style="left:1336.5px;top:116.7px;font-size:12.5px;color:#333a44;transform:scaleX(0.913);">Offset Faccia</span><span class="t" style="left:1433.5px;top:72.7px;font-size:12.5px;color:#333a44;transform:scaleX(0.905);">Cancella Faccia</span><span class="t" style="left:1433.5px;top:94.7px;font-size:12.5px;color:#a9a9a9;transform:scaleX(0.901);">Raggio Faccia</span><span class="t" style="left:1433.5px;top:116.7px;font-size:12.5px;color:#333a44;transform:scaleX(0.867);">Separa Facce</span><span class="t" style="left:1373.5px;top:141.7px;font-size:12.5px;color:#6a6f76;transform:scaleX(0.967);">Modifica Diretta</span>
<!-- g_left -->
<div class="b" style="left:0px;top:0px;width:1px;height:900px;background:#2c60bb;"></div><div class="b" style="left:1px;top:65px;width:2px;height:834px;background:#ececf0;"></div><div class="b" style="left:3px;top:166px;width:1594px;height:712px;background:#e8e8e8;"></div><div class="b" style="left:3px;top:166px;width:1330px;height:20px;background:#e4e4e4;"></div><svg class="b" style="left:3px;top:166px;" width="155" height="20" viewBox="0 0 155 20"><path d="M0 20L20 0.500H152.500V20Z" fill="#f7f7f7" stroke="#cfcfcf" stroke-width="1"/></svg><div class="b" style="left:3px;top:185.5px;width:1330px;height:1.5px;background:#f3f3f3;"></div><span class="t" style="left:38.5px;top:167.8px;font-size:12px;color:#1f2a3a;font-weight:bold;transform:scaleX(0.866);">RECEPTION_s.ics</span><svg class="b" style="left:142px;top:172px;" width="8" height="8" viewBox="0 0 8 8"><path d="M0.700 0.700L7.300 7.300M7.300 0.700L0.700 7.300" stroke="#444" stroke-width="1.300"/></svg><svg class="b" style="left:1311px;top:172px;" width="9" height="6" viewBox="0 0 9 6"><path d="M0 0H9L4.500 5Z" fill="#555"/></svg><div class="b" style="left:3px;top:187px;width:222px;height:691px;background:#e9e9e9;"></div><span class="t" style="left:7.5px;top:189.7px;font-size:12.5px;color:#444;transform:scaleX(0.846);">Scena</span><svg class="b" style="left:189px;top:197px;" width="9" height="6" viewBox="0 0 9 6"><path d="M0 0H9L4.500 5Z" fill="#555"/></svg><svg class="b" style="left:208px;top:194px;" width="9" height="11" viewBox="0 0 9 11"><path d="M2.500 0.500H6V5H2.500Z" fill="#666" stroke="#444" stroke-width="1"/><path d="M6.300 0.500V5" stroke="#333" stroke-width="1.400"/><path d="M0.800 5.500H8.200M4.500 5.500V9.500" stroke="#444" stroke-width="1.300" fill="none"/></svg><div class="b" style="left:3px;top:211.5px;width:178px;height:19.5px;background:#fff;"></div><span class="t" style="left:8.5px;top:212.2px;font-size:12.5px;color:#777;transform:scaleX(0.868);">Cerca...</span><svg class="b" style="left:185px;top:215px;" width="13" height="12" viewBox="0 0 13 12"><path d="M1 1L12 11M12 1L1 11" stroke="#f0532d" stroke-width="2"/></svg><svg class="b" style="left:205px;top:214px;" width="16" height="15" viewBox="0 0 16 15"><path d="M2.500 0L3.200 1.700 5 2 3.600 3.200 4 5 2.500 4 1 5 1.400 3.200 0 2 1.800 1.700Z" fill="#e8b21a"/><path d="M10 3L7.500 8M10 3L12.500 8M7.500 8L6 13M7.500 8L9 13M12.500 8L14 13" stroke="#7fb0d8" stroke-width="0.700"/><g fill="#fff" stroke="#6aa0cc" stroke-width="0.700"><rect x="9" y="1.500" width="2" height="2"/><rect x="6.500" y="7" width="2" height="2"/><rect x="11.500" y="7" width="2" height="2"/><rect x="5" y="12" width="2" height="2"/><rect x="8" y="12" width="2" height="2"/><rect x="11" y="12" width="2" height="2"/><rect x="13.500" y="12" width="2" height="2"/></g></svg><div class="b" style="left:3px;top:231px;width:220px;height:622px;background:#f1f1f1;border:1px solid #6e6e6e;border-right-color:#d0d0d0;border-bottom-color:#777;"></div><div class="b" style="left:4px;top:232px;width:203px;height:603px;background:#fff;"></div><div class="b" style="left:0;top:0;width:207px;height:835px;overflow:hidden"><svg class="b" style="left:0;top:0" width="230" height="836" viewBox="0 0 230 836"><path d="M16.500 252V819" stroke="#9a9a9a" stroke-width="1" stroke-dasharray="1 1"/><path d="M21 261.5 H27" stroke="#9a9a9a" stroke-width="1" stroke-dasharray="1 1"/><path d="M21 279.5 H27" stroke="#9a9a9a" stroke-width="1" stroke-dasharray="1 1"/><path d="M40 297.5 H46" stroke="#9a9a9a" stroke-width="1" stroke-dasharray="1 1"/><path d="M40 315.5 H46" stroke="#9a9a9a" stroke-width="1" stroke-dasharray="1 1"/><path d="M40 333.5 H46" stroke="#9a9a9a" stroke-width="1" stroke-dasharray="1 1"/><path d="M40 351.5 H46" stroke="#9a9a9a" stroke-width="1" stroke-dasharray="1 1"/><path d="M40 369.5 H46" stroke="#9a9a9a" stroke-width="1" stroke-dasharray="1 1"/><path d="M40 387.5 H46" stroke="#9a9a9a" stroke-width="1" stroke-dasharray="1 1"/><path d="M40 405.5 H46" stroke="#9a9a9a" stroke-width="1" stroke-dasharray="1 1"/><path d="M40 423.5 H46" stroke="#9a9a9a" stroke-width="1" stroke-dasharray="1 1"/><path d="M40 441.5 H46" stroke="#9a9a9a" stroke-width="1" stroke-dasharray="1 1"/><path d="M40 459.5 H46" stroke="#9a9a9a" stroke-width="1" stroke-dasharray="1 1"/><path d="M21 477.5 H27" stroke="#9a9a9a" stroke-width="1" stroke-dasharray="1 1"/><path d="M40 495.5 H46" stroke="#9a9a9a" stroke-width="1" stroke-dasharray="1 1"/><path d="M40 513.5 H46" stroke="#9a9a9a" stroke-width="1" stroke-dasharray="1 1"/><path d="M40 531.5 H46" stroke="#9a9a9a" stroke-width="1" stroke-dasharray="1 1"/><path d="M40 549.5 H46" stroke="#9a9a9a" stroke-width="1" stroke-dasharray="1 1"/><path d="M40 567.5 H46" stroke="#9a9a9a" stroke-width="1" stroke-dasharray="1 1"/><path d="M40 585.5 H46" stroke="#9a9a9a" stroke-width="1" stroke-dasharray="1 1"/><path d="M40 603.5 H46" stroke="#9a9a9a" stroke-width="1" stroke-dasharray="1 1"/><path d="M40 621.5 H46" stroke="#9a9a9a" stroke-width="1" stroke-dasharray="1 1"/><path d="M21 639.5 H27" stroke="#9a9a9a" stroke-width="1" stroke-dasharray="1 1"/><path d="M40 657.5 H46" stroke="#9a9a9a" stroke-width="1" stroke-dasharray="1 1"/><path d="M40 675.5 H46" stroke="#9a9a9a" stroke-width="1" stroke-dasharray="1 1"/><path d="M40 693.5 H46" stroke="#9a9a9a" stroke-width="1" stroke-dasharray="1 1"/><path d="M40 711.5 H46" stroke="#9a9a9a" stroke-width="1" stroke-dasharray="1 1"/><path d="M40 729.5 H46" stroke="#9a9a9a" stroke-width="1" stroke-dasharray="1 1"/><path d="M21 747.5 H27" stroke="#9a9a9a" stroke-width="1" stroke-dasharray="1 1"/><path d="M40 765.5 H46" stroke="#9a9a9a" stroke-width="1" stroke-dasharray="1 1"/><path d="M40 783.5 H46" stroke="#9a9a9a" stroke-width="1" stroke-dasharray="1 1"/><path d="M40 801.5 H46" stroke="#9a9a9a" stroke-width="1" stroke-dasharray="1 1"/><path d="M21 819.5 H27" stroke="#9a9a9a" stroke-width="1" stroke-dasharray="1 1"/><path d="M40 837.5 H46" stroke="#9a9a9a" stroke-width="1" stroke-dasharray="1 1"/><path d="M35.500 287.5 V459.5" stroke="#9a9a9a" stroke-width="1" stroke-dasharray="1 1"/><path d="M35.500 485.5 V621.5" stroke="#9a9a9a" stroke-width="1" stroke-dasharray="1 1"/><path d="M35.500 647.5 V729.5" stroke="#9a9a9a" stroke-width="1" stroke-dasharray="1 1"/><path d="M35.500 755.5 V801.5" stroke="#9a9a9a" stroke-width="1" stroke-dasharray="1 1"/><path d="M35.500 827.5 V837.5" stroke="#9a9a9a" stroke-width="1" stroke-dasharray="1 1"/></svg><svg class="b" style="left:8px;top:235px;" width="16" height="17" viewBox="0 0 16 17"><path d="M2 1L6 4 8 2 10 4 14 1 13 5 16 7 11 8 9 12 6 8 1 9 4 6Z" fill="#e0161e"/><path d="M3 11L8 14 14 11M3 13.500L8 16 14 13.500" stroke="#e0161e" stroke-width="1.300" fill="none"/><rect x="6.500" y="5" width="3" height="4" fill="#7a0a10"/></svg><span class="t" style="left:29.5px;top:233.7px;font-size:12.5px;color:#111;transform:scaleX(0.908);">D:\IronCAD\Oikema\RECEPTION_</span><svg class="b" style="left:12px;top:257px;" width="9" height="9" viewBox="0 0 9 9"><rect x="0.500" y="0.500" width="8" height="8" fill="#fff" stroke="#9a9a9a" stroke-width="1"/><path d="M2.500 4.500H6.500" stroke="#3b4a8a" stroke-width="1"/><path d="M4.500 2.500V6.500" stroke="#3b4a8a" stroke-width="1"/></svg><svg class="b" style="left:27px;top:253.5px;" width="16" height="15" viewBox="0 0 16 15"><path d="M6 10V1M6 10H14M6 10L1 14" stroke="#222" stroke-width="1.400" fill="none"/><path d="M4 3L6 0 8 3ZM12 8L15 10 12 12ZM0.500 11.500L0.500 14.500 3.500 14.500Z" fill="#222"/></svg><span class="t" style="left:48.3px;top:251.7px;font-size:12.5px;color:#111;transform:scaleX(0.932);">Sistema di Coordinate Globale</span><svg class="b" style="left:12px;top:275px;" width="9" height="9" viewBox="0 0 9 9"><rect x="0.500" y="0.500" width="8" height="8" fill="#fff" stroke="#9a9a9a" stroke-width="1"/><path d="M2.500 4.500H6.500" stroke="#3b4a8a" stroke-width="1"/></svg><svg class="b" style="left:27px;top:271.5px;" width="16" height="15" viewBox="0 0 16 15"><path d="M0.500 3L4.500 0.800 15.500 7V11.500L11 14 0.500 7.500Z" fill="#f5c518" stroke="#3a2c00" stroke-width="0.900"/><path d="M0.500 3L11 9.500V14M11 9.500L15.500 7" stroke="#3a2c00" stroke-width="0.800" fill="none"/><path d="M1.200 3.200L4.500 1.500 14.500 7 11 9Z" fill="#fbe37a"/><path d="M5 3L8.500 1 13.500 3.800V8.500L10 10.300 5 7.500Z" fill="#4f8fe8" stroke="#0a1f5a" stroke-width="0.900"/><path d="M5 3L10 5.800V10.300M10 5.800L13.500 3.800" stroke="#0a1f5a" stroke-width="0.700" fill="none"/><path d="M5.800 3.100L8.500 1.700 12.500 3.900 10 5.200Z" fill="#a9ccff"/><path d="M10.500 9.800H14V12.800H10.500Z" fill="#f8d84a" stroke="#3a2c00" stroke-width="0.600"/></svg><span class="t" style="left:48.3px;top:269.7px;font-size:12.5px;color:#111;transform:scaleX(0.869);">M_sx1</span><svg class="b" style="left:31px;top:293px;" width="9" height="9" viewBox="0 0 9 9"><rect x="0.500" y="0.500" width="8" height="8" fill="#fff" stroke="#9a9a9a" stroke-width="1"/><path d="M2.500 4.500H6.500" stroke="#3b4a8a" stroke-width="1"/><path d="M4.500 2.500V6.500" stroke="#3b4a8a" stroke-width="1"/></svg><svg class="b" style="left:46.5px;top:290px;" width="16" height="15" viewBox="0 0 16 15"><path d="M0.500 9L3.500 6.500V3.500L6.500 0.500H11.500V4.500L14 4.500V10L8.500 14.500H0.500Z" fill="#2a7be6" stroke="#050a1e" stroke-width="1"/><path d="M3.500 3.500H8.500L11.500 0.500M8.500 3.500V8M3.500 6.500V8.500M0.500 9H8.500V14.500M8.500 9L14 4.500M8.500 8H3.500" stroke="#050a1e" stroke-width="0.800" fill="none"/><path d="M4 4H8V7.500H4Z" fill="#4a9cf5"/><path d="M1 9.500H8V11.500H1Z" fill="#5aa8f8"/><path d="M4.500 3L6.800 1H10.300L8.200 3Z" fill="#8cc4ff"/></svg><span class="t" style="left:67.5px;top:287.7px;font-size:12.5px;color:#111;transform:scaleX(0.831);">MS_SP1</span><svg class="b" style="left:31px;top:311px;" width="9" height="9" viewBox="0 0 9 9"><rect x="0.500" y="0.500" width="8" height="8" fill="#fff" stroke="#9a9a9a" stroke-width="1"/><path d="M2.500 4.500H6.500" stroke="#3b4a8a" stroke-width="1"/><path d="M4.500 2.500V6.500" stroke="#3b4a8a" stroke-width="1"/></svg><svg class="b" style="left:46.5px;top:308px;" width="16" height="15" viewBox="0 0 16 15"><path d="M0.500 9L3.500 6.500V3.500L6.500 0.500H11.500V4.500L14 4.500V10L8.500 14.500H0.500Z" fill="#2a7be6" stroke="#050a1e" stroke-width="1"/><path d="M3.500 3.500H8.500L11.500 0.500M8.500 3.500V8M3.500 6.500V8.500M0.500 9H8.500V14.500M8.500 9L14 4.500M8.500 8H3.500" stroke="#050a1e" stroke-width="0.800" fill="none"/><path d="M4 4H8V7.500H4Z" fill="#4a9cf5"/><path d="M1 9.500H8V11.500H1Z" fill="#5aa8f8"/><path d="M4.500 3L6.800 1H10.300L8.200 3Z" fill="#8cc4ff"/></svg><span class="t" style="left:67.5px;top:305.7px;font-size:12.5px;color:#111;transform:scaleX(0.870);">MS_SP1M</span><svg class="b" style="left:31px;top:329px;" width="9" height="9" viewBox="0 0 9 9"><rect x="0.500" y="0.500" width="8" height="8" fill="#fff" stroke="#9a9a9a" stroke-width="1"/><path d="M2.500 4.500H6.500" stroke="#3b4a8a" stroke-width="1"/><path d="M4.500 2.500V6.500" stroke="#3b4a8a" stroke-width="1"/></svg><svg class="b" style="left:46.5px;top:326px;" width="16" height="15" viewBox="0 0 16 15"><path d="M0.500 9L3.500 6.500V3.500L6.500 0.500H11.500V4.500L14 4.500V10L8.500 14.500H0.500Z" fill="#2a7be6" stroke="#050a1e" stroke-width="1"/><path d="M3.500 3.500H8.500L11.500 0.500M8.500 3.500V8M3.500 6.500V8.500M0.500 9H8.500V14.500M8.500 9L14 4.500M8.500 8H3.500" stroke="#050a1e" stroke-width="0.800" fill="none"/><path d="M4 4H8V7.500H4Z" fill="#4a9cf5"/><path d="M1 9.500H8V11.500H1Z" fill="#5aa8f8"/><path d="M4.500 3L6.800 1H10.300L8.200 3Z" fill="#8cc4ff"/></svg><span class="t" style="left:67.5px;top:323.7px;font-size:12.5px;color:#111;transform:scaleX(0.864);">B-S</span><svg class="b" style="left:31px;top:347px;" width="9" height="9" viewBox="0 0 9 9"><rect x="0.500" y="0.500" width="8" height="8" fill="#fff" stroke="#9a9a9a" stroke-width="1"/><path d="M2.500 4.500H6.500" stroke="#3b4a8a" stroke-width="1"/><path d="M4.500 2.500V6.500" stroke="#3b4a8a" stroke-width="1"/></svg><svg class="b" style="left:46.5px;top:344px;" width="16" height="15" viewBox="0 0 16 15"><path d="M0.500 9L3.500 6.500V3.500L6.500 0.500H11.500V4.500L14 4.500V10L8.500 14.500H0.500Z" fill="#2a7be6" stroke="#050a1e" stroke-width="1"/><path d="M3.500 3.500H8.500L11.500 0.500M8.500 3.500V8M3.500 6.500V8.500M0.500 9H8.500V14.500M8.500 9L14 4.500M8.500 8H3.500" stroke="#050a1e" stroke-width="0.800" fill="none"/><path d="M4 4H8V7.500H4Z" fill="#4a9cf5"/><path d="M1 9.500H8V11.500H1Z" fill="#5aa8f8"/><path d="M4.500 3L6.800 1H10.300L8.200 3Z" fill="#8cc4ff"/></svg><span class="t" style="left:67.5px;top:341.7px;font-size:12.5px;color:#111;transform:scaleX(0.814);">R1</span><svg class="b" style="left:31px;top:365px;" width="9" height="9" viewBox="0 0 9 9"><rect x="0.500" y="0.500" width="8" height="8" fill="#fff" stroke="#9a9a9a" stroke-width="1"/><path d="M2.500 4.500H6.500" stroke="#3b4a8a" stroke-width="1"/><path d="M4.500 2.500V6.500" stroke="#3b4a8a" stroke-width="1"/></svg><svg class="b" style="left:46.5px;top:362px;" width="16" height="15" viewBox="0 0 16 15"><path d="M0.500 9L3.500 6.500V3.500L6.500 0.500H11.500V4.500L14 4.500V10L8.500 14.500H0.500Z" fill="#2a7be6" stroke="#050a1e" stroke-width="1"/><path d="M3.500 3.500H8.500L11.500 0.500M8.500 3.500V8M3.500 6.500V8.500M0.500 9H8.500V14.500M8.500 9L14 4.500M8.500 8H3.500" stroke="#050a1e" stroke-width="0.800" fill="none"/><path d="M4 4H8V7.500H4Z" fill="#4a9cf5"/><path d="M1 9.500H8V11.500H1Z" fill="#5aa8f8"/><path d="M4.500 3L6.800 1H10.300L8.200 3Z" fill="#8cc4ff"/></svg><span class="t" style="left:67.5px;top:359.7px;font-size:12.5px;color:#111;transform:scaleX(0.814);">R3</span><svg class="b" style="left:31px;top:383px;" width="9" height="9" viewBox="0 0 9 9"><rect x="0.500" y="0.500" width="8" height="8" fill="#fff" stroke="#9a9a9a" stroke-width="1"/><path d="M2.500 4.500H6.500" stroke="#3b4a8a" stroke-width="1"/><path d="M4.500 2.500V6.500" stroke="#3b4a8a" stroke-width="1"/></svg><svg class="b" style="left:46.5px;top:380px;" width="16" height="15" viewBox="0 0 16 15"><path d="M0.500 9L3.500 6.500V3.500L6.500 0.500H11.500V4.500L14 4.500V10L8.500 14.500H0.500Z" fill="#2a7be6" stroke="#050a1e" stroke-width="1"/><path d="M3.500 3.500H8.500L11.500 0.500M8.500 3.500V8M3.500 6.500V8.500M0.500 9H8.500V14.500M8.500 9L14 4.500M8.500 8H3.500" stroke="#050a1e" stroke-width="0.800" fill="none"/><path d="M4 4H8V7.500H4Z" fill="#4a9cf5"/><path d="M1 9.500H8V11.500H1Z" fill="#5aa8f8"/><path d="M4.500 3L6.800 1H10.300L8.200 3Z" fill="#8cc4ff"/></svg><span class="t" style="left:67.5px;top:377.7px;font-size:12.5px;color:#111;transform:scaleX(0.814);">R2</span><svg class="b" style="left:31px;top:401px;" width="9" height="9" viewBox="0 0 9 9"><rect x="0.500" y="0.500" width="8" height="8" fill="#fff" stroke="#9a9a9a" stroke-width="1"/><path d="M2.500 4.500H6.500" stroke="#3b4a8a" stroke-width="1"/><path d="M4.500 2.500V6.500" stroke="#3b4a8a" stroke-width="1"/></svg><svg class="b" style="left:46.5px;top:398px;" width="16" height="15" viewBox="0 0 16 15"><path d="M0.500 9L3.500 6.500V3.500L6.500 0.500H11.500V4.500L14 4.500V10L8.500 14.500H0.500Z" fill="#2a7be6" stroke="#050a1e" stroke-width="1"/><path d="M3.500 3.500H8.500L11.500 0.500M8.500 3.500V8M3.500 6.500V8.500M0.500 9H8.500V14.500M8.500 9L14 4.500M8.500 8H3.500" stroke="#050a1e" stroke-width="0.800" fill="none"/><path d="M4 4H8V7.500H4Z" fill="#4a9cf5"/><path d="M1 9.500H8V11.500H1Z" fill="#5aa8f8"/><path d="M4.500 3L6.800 1H10.300L8.200 3Z" fill="#8cc4ff"/></svg><span class="t" style="left:67.5px;top:395.7px;font-size:12.5px;color:#111;transform:scaleX(0.762);">P_S</span><svg class="b" style="left:31px;top:419px;" width="9" height="9" viewBox="0 0 9 9"><rect x="0.500" y="0.500" width="8" height="8" fill="#fff" stroke="#9a9a9a" stroke-width="1"/><path d="M2.500 4.500H6.500" stroke="#3b4a8a" stroke-width="1"/><path d="M4.500 2.500V6.500" stroke="#3b4a8a" stroke-width="1"/></svg><svg class="b" style="left:46.5px;top:416px;" width="16" height="15" viewBox="0 0 16 15"><path d="M0.500 9L3.500 6.500V3.500L6.500 0.500H11.500V4.500L14 4.500V10L8.500 14.500H0.500Z" fill="#2a7be6" stroke="#050a1e" stroke-width="1"/><path d="M3.500 3.500H8.500L11.500 0.500M8.500 3.500V8M3.500 6.500V8.500M0.500 9H8.500V14.500M8.500 9L14 4.500M8.500 8H3.500" stroke="#050a1e" stroke-width="0.800" fill="none"/><path d="M4 4H8V7.500H4Z" fill="#4a9cf5"/><path d="M1 9.500H8V11.500H1Z" fill="#5aa8f8"/><path d="M4.500 3L6.800 1H10.300L8.200 3Z" fill="#8cc4ff"/></svg><span class="t" style="left:67.5px;top:413.7px;font-size:12.5px;color:#111;transform:scaleX(0.822);">P_D</span><svg class="b" style="left:31px;top:437px;" width="9" height="9" viewBox="0 0 9 9"><rect x="0.500" y="0.500" width="8" height="8" fill="#fff" stroke="#9a9a9a" stroke-width="1"/><path d="M2.500 4.500H6.500" stroke="#3b4a8a" stroke-width="1"/><path d="M4.500 2.500V6.500" stroke="#3b4a8a" stroke-width="1"/></svg><svg class="b" style="left:46.5px;top:434px;" width="16" height="15" viewBox="0 0 16 15"><path d="M0.500 9L3.500 6.500V3.500L6.500 0.500H11.500V4.500L14 4.500V10L8.500 14.500H0.500Z" fill="#2a7be6" stroke="#050a1e" stroke-width="1"/><path d="M3.500 3.500H8.500L11.500 0.500M8.500 3.500V8M3.500 6.500V8.500M0.500 9H8.500V14.500M8.500 9L14 4.500M8.500 8H3.500" stroke="#050a1e" stroke-width="0.800" fill="none"/><path d="M4 4H8V7.500H4Z" fill="#4a9cf5"/><path d="M1 9.500H8V11.500H1Z" fill="#5aa8f8"/><path d="M4.500 3L6.800 1H10.300L8.200 3Z" fill="#8cc4ff"/></svg><span class="t" style="left:67.5px;top:431.7px;font-size:12.5px;color:#111;transform:scaleX(0.822);">SpallaEST_SX</span><svg class="b" style="left:31px;top:455px;" width="9" height="9" viewBox="0 0 9 9"><rect x="0.500" y="0.500" width="8" height="8" fill="#fff" stroke="#9a9a9a" stroke-width="1"/><path d="M2.500 4.500H6.500" stroke="#3b4a8a" stroke-width="1"/><path d="M4.500 2.500V6.500" stroke="#3b4a8a" stroke-width="1"/></svg><svg class="b" style="left:46.5px;top:452px;" width="16" height="15" viewBox="0 0 16 15"><path d="M0.500 9L3.500 6.500V3.500L6.500 0.500H11.500V4.500L14 4.500V10L8.500 14.500H0.500Z" fill="#2a7be6" stroke="#050a1e" stroke-width="1"/><path d="M3.500 3.500H8.500L11.500 0.500M8.500 3.500V8M3.500 6.500V8.500M0.500 9H8.500V14.500M8.500 9L14 4.500M8.500 8H3.500" stroke="#050a1e" stroke-width="0.800" fill="none"/><path d="M4 4H8V7.500H4Z" fill="#4a9cf5"/><path d="M1 9.500H8V11.500H1Z" fill="#5aa8f8"/><path d="M4.500 3L6.800 1H10.300L8.200 3Z" fill="#8cc4ff"/></svg><span class="t" style="left:67.5px;top:449.7px;font-size:12.5px;color:#111;transform:scaleX(0.945);">anta</span><svg class="b" style="left:12px;top:473px;" width="9" height="9" viewBox="0 0 9 9"><rect x="0.500" y="0.500" width="8" height="8" fill="#fff" stroke="#9a9a9a" stroke-width="1"/><path d="M2.500 4.500H6.500" stroke="#3b4a8a" stroke-width="1"/></svg><svg class="b" style="left:27px;top:469.5px;" width="16" height="15" viewBox="0 0 16 15"><path d="M0.500 3L4.500 0.800 15.500 7V11.500L11 14 0.500 7.500Z" fill="#f5c518" stroke="#3a2c00" stroke-width="0.900"/><path d="M0.500 3L11 9.500V14M11 9.500L15.500 7" stroke="#3a2c00" stroke-width="0.800" fill="none"/><path d="M1.200 3.200L4.500 1.500 14.500 7 11 9Z" fill="#fbe37a"/><path d="M5 3L8.500 1 13.500 3.800V8.500L10 10.300 5 7.500Z" fill="#4f8fe8" stroke="#0a1f5a" stroke-width="0.900"/><path d="M5 3L10 5.800V10.300M10 5.800L13.500 3.800" stroke="#0a1f5a" stroke-width="0.700" fill="none"/><path d="M5.800 3.100L8.500 1.700 12.500 3.900 10 5.200Z" fill="#a9ccff"/><path d="M10.500 9.800H14V12.800H10.500Z" fill="#f8d84a" stroke="#3a2c00" stroke-width="0.600"/></svg><span class="t" style="left:48.3px;top:467.7px;font-size:12.5px;color:#111;transform:scaleX(0.992);">Top</span><svg class="b" style="left:31px;top:491px;" width="9" height="9" viewBox="0 0 9 9"><rect x="0.500" y="0.500" width="8" height="8" fill="#fff" stroke="#9a9a9a" stroke-width="1"/><path d="M2.500 4.500H6.500" stroke="#3b4a8a" stroke-width="1"/><path d="M4.500 2.500V6.500" stroke="#3b4a8a" stroke-width="1"/></svg><svg class="b" style="left:46.5px;top:488px;" width="16" height="15" viewBox="0 0 16 15"><path d="M0.500 9L3.500 6.500V3.500L6.500 0.500H11.500V4.500L14 4.500V10L8.500 14.500H0.500Z" fill="#2a7be6" stroke="#050a1e" stroke-width="1"/><path d="M3.500 3.500H8.500L11.500 0.500M8.500 3.500V8M3.500 6.500V8.500M0.500 9H8.500V14.500M8.500 9L14 4.500M8.500 8H3.500" stroke="#050a1e" stroke-width="0.800" fill="none"/><path d="M4 4H8V7.500H4Z" fill="#4a9cf5"/><path d="M1 9.500H8V11.500H1Z" fill="#5aa8f8"/><path d="M4.500 3L6.800 1H10.300L8.200 3Z" fill="#8cc4ff"/></svg><span class="t" style="left:67.5px;top:485.7px;font-size:12.5px;color:#111;transform:scaleX(0.983);">TopB</span><svg class="b" style="left:31px;top:509px;" width="9" height="9" viewBox="0 0 9 9"><rect x="0.500" y="0.500" width="8" height="8" fill="#fff" stroke="#9a9a9a" stroke-width="1"/><path d="M2.500 4.500H6.500" stroke="#3b4a8a" stroke-width="1"/><path d="M4.500 2.500V6.500" stroke="#3b4a8a" stroke-width="1"/></svg><svg class="b" style="left:46.5px;top:506px;" width="16" height="15" viewBox="0 0 16 15"><path d="M0.500 9L3.500 6.500V3.500L6.500 0.500H11.500V4.500L14 4.500V10L8.500 14.500H0.500Z" fill="#2a7be6" stroke="#050a1e" stroke-width="1"/><path d="M3.500 3.500H8.500L11.500 0.500M8.500 3.500V8M3.500 6.500V8.500M0.500 9H8.500V14.500M8.500 9L14 4.500M8.500 8H3.500" stroke="#050a1e" stroke-width="0.800" fill="none"/><path d="M4 4H8V7.500H4Z" fill="#4a9cf5"/><path d="M1 9.500H8V11.500H1Z" fill="#5aa8f8"/><path d="M4.500 3L6.800 1H10.300L8.200 3Z" fill="#8cc4ff"/></svg><span class="t" style="left:67.5px;top:503.7px;font-size:12.5px;color:#111;transform:scaleX(0.983);">TopB</span><svg class="b" style="left:31px;top:527px;" width="9" height="9" viewBox="0 0 9 9"><rect x="0.500" y="0.500" width="8" height="8" fill="#fff" stroke="#9a9a9a" stroke-width="1"/><path d="M2.500 4.500H6.500" stroke="#3b4a8a" stroke-width="1"/><path d="M4.500 2.500V6.500" stroke="#3b4a8a" stroke-width="1"/></svg><svg class="b" style="left:46.5px;top:524px;" width="16" height="15" viewBox="0 0 16 15"><path d="M0.500 9L3.500 6.500V3.500L6.500 0.500H11.500V4.500L14 4.500V10L8.500 14.500H0.500Z" fill="#2a7be6" stroke="#050a1e" stroke-width="1"/><path d="M3.500 3.500H8.500L11.500 0.500M8.500 3.500V8M3.500 6.500V8.500M0.500 9H8.500V14.500M8.500 9L14 4.500M8.500 8H3.500" stroke="#050a1e" stroke-width="0.800" fill="none"/><path d="M4 4H8V7.500H4Z" fill="#4a9cf5"/><path d="M1 9.500H8V11.500H1Z" fill="#5aa8f8"/><path d="M4.500 3L6.800 1H10.300L8.200 3Z" fill="#8cc4ff"/></svg><span class="t" style="left:67.5px;top:521.7px;font-size:12.5px;color:#111;transform:scaleX(0.931);">Tastiera-R</span><svg class="b" style="left:31px;top:545px;" width="9" height="9" viewBox="0 0 9 9"><rect x="0.500" y="0.500" width="8" height="8" fill="#fff" stroke="#9a9a9a" stroke-width="1"/><path d="M2.500 4.500H6.500" stroke="#3b4a8a" stroke-width="1"/><path d="M4.500 2.500V6.500" stroke="#3b4a8a" stroke-width="1"/></svg><svg class="b" style="left:46.5px;top:542px;" width="16" height="15" viewBox="0 0 16 15"><path d="M0.500 9L3.500 6.500V3.500L6.500 0.500H11.500V4.500L14 4.500V10L8.500 14.500H0.500Z" fill="#2a7be6" stroke="#050a1e" stroke-width="1"/><path d="M3.500 3.500H8.500L11.500 0.500M8.500 3.500V8M3.500 6.500V8.500M0.500 9H8.500V14.500M8.500 9L14 4.500M8.500 8H3.500" stroke="#050a1e" stroke-width="0.800" fill="none"/><path d="M4 4H8V7.500H4Z" fill="#4a9cf5"/><path d="M1 9.500H8V11.500H1Z" fill="#5aa8f8"/><path d="M4.500 3L6.800 1H10.300L8.200 3Z" fill="#8cc4ff"/></svg><span class="t" style="left:67.5px;top:539.7px;font-size:12.5px;color:#111;transform:scaleX(0.948);">Tastiera-C</span><svg class="b" style="left:31px;top:563px;" width="9" height="9" viewBox="0 0 9 9"><rect x="0.500" y="0.500" width="8" height="8" fill="#fff" stroke="#9a9a9a" stroke-width="1"/><path d="M2.500 4.500H6.500" stroke="#3b4a8a" stroke-width="1"/><path d="M4.500 2.500V6.500" stroke="#3b4a8a" stroke-width="1"/></svg><svg class="b" style="left:46.5px;top:560px;" width="16" height="15" viewBox="0 0 16 15"><path d="M0.500 9L3.500 6.500V3.500L6.500 0.500H11.500V4.500L14 4.500V10L8.500 14.500H0.500Z" fill="#2a7be6" stroke="#050a1e" stroke-width="1"/><path d="M3.500 3.500H8.500L11.500 0.500M8.500 3.500V8M3.500 6.500V8.500M0.500 9H8.500V14.500M8.500 9L14 4.500M8.500 8H3.500" stroke="#050a1e" stroke-width="0.800" fill="none"/><path d="M4 4H8V7.500H4Z" fill="#4a9cf5"/><path d="M1 9.500H8V11.500H1Z" fill="#5aa8f8"/><path d="M4.500 3L6.800 1H10.300L8.200 3Z" fill="#8cc4ff"/></svg><span class="t" style="left:67.5px;top:557.7px;font-size:12.5px;color:#111;transform:scaleX(0.973);">Top-S-cx</span><svg class="b" style="left:31px;top:581px;" width="9" height="9" viewBox="0 0 9 9"><rect x="0.500" y="0.500" width="8" height="8" fill="#fff" stroke="#9a9a9a" stroke-width="1"/><path d="M2.500 4.500H6.500" stroke="#3b4a8a" stroke-width="1"/><path d="M4.500 2.500V6.500" stroke="#3b4a8a" stroke-width="1"/></svg><svg class="b" style="left:46.5px;top:578px;" width="16" height="15" viewBox="0 0 16 15"><path d="M0.500 9L3.500 6.500V3.500L6.500 0.500H11.500V4.500L14 4.500V10L8.500 14.500H0.500Z" fill="#2a7be6" stroke="#050a1e" stroke-width="1"/><path d="M3.500 3.500H8.500L11.500 0.500M8.500 3.500V8M3.500 6.500V8.500M0.500 9H8.500V14.500M8.500 9L14 4.500M8.500 8H3.500" stroke="#050a1e" stroke-width="0.800" fill="none"/><path d="M4 4H8V7.500H4Z" fill="#4a9cf5"/><path d="M1 9.500H8V11.500H1Z" fill="#5aa8f8"/><path d="M4.500 3L6.800 1H10.300L8.200 3Z" fill="#8cc4ff"/></svg><span class="t" style="left:67.5px;top:575.7px;font-size:12.5px;color:#111;transform:scaleX(0.980);">Top-S-dx</span><svg class="b" style="left:31px;top:599px;" width="9" height="9" viewBox="0 0 9 9"><rect x="0.500" y="0.500" width="8" height="8" fill="#fff" stroke="#9a9a9a" stroke-width="1"/><path d="M2.500 4.500H6.500" stroke="#3b4a8a" stroke-width="1"/><path d="M4.500 2.500V6.500" stroke="#3b4a8a" stroke-width="1"/></svg><svg class="b" style="left:46.5px;top:596px;" width="16" height="15" viewBox="0 0 16 15"><path d="M0.500 9L3.500 6.500V3.500L6.500 0.500H11.500V4.500L14 4.500V10L8.500 14.500H0.500Z" fill="#2a7be6" stroke="#050a1e" stroke-width="1"/><path d="M3.500 3.500H8.500L11.500 0.500M8.500 3.500V8M3.500 6.500V8.500M0.500 9H8.500V14.500M8.500 9L14 4.500M8.500 8H3.500" stroke="#050a1e" stroke-width="0.800" fill="none"/><path d="M4 4H8V7.500H4Z" fill="#4a9cf5"/><path d="M1 9.500H8V11.500H1Z" fill="#5aa8f8"/><path d="M4.500 3L6.800 1H10.300L8.200 3Z" fill="#8cc4ff"/></svg><span class="t" style="left:67.5px;top:593.7px;font-size:12.5px;color:#111;transform:scaleX(0.953);">Top-S-sx</span><svg class="b" style="left:31px;top:617px;" width="9" height="9" viewBox="0 0 9 9"><rect x="0.500" y="0.500" width="8" height="8" fill="#fff" stroke="#9a9a9a" stroke-width="1"/><path d="M2.500 4.500H6.500" stroke="#3b4a8a" stroke-width="1"/><path d="M4.500 2.500V6.500" stroke="#3b4a8a" stroke-width="1"/></svg><svg class="b" style="left:46.5px;top:614px;" width="16" height="15" viewBox="0 0 16 15"><path d="M0.500 9L3.500 6.500V3.500L6.500 0.500H11.500V4.500L14 4.500V10L8.500 14.500H0.500Z" fill="#2a7be6" stroke="#050a1e" stroke-width="1"/><path d="M3.500 3.500H8.500L11.500 0.500M8.500 3.500V8M3.500 6.500V8.500M0.500 9H8.500V14.500M8.500 9L14 4.500M8.500 8H3.500" stroke="#050a1e" stroke-width="0.800" fill="none"/><path d="M4 4H8V7.500H4Z" fill="#4a9cf5"/><path d="M1 9.500H8V11.500H1Z" fill="#5aa8f8"/><path d="M4.500 3L6.800 1H10.300L8.200 3Z" fill="#8cc4ff"/></svg><span class="t" style="left:67.5px;top:611.7px;font-size:12.5px;color:#111;transform:scaleX(0.960);">Top-S-dx 2</span><svg class="b" style="left:12px;top:635px;" width="9" height="9" viewBox="0 0 9 9"><rect x="0.500" y="0.500" width="8" height="8" fill="#fff" stroke="#9a9a9a" stroke-width="1"/><path d="M2.500 4.500H6.500" stroke="#3b4a8a" stroke-width="1"/></svg><svg class="b" style="left:27px;top:631.5px;" width="16" height="15" viewBox="0 0 16 15"><path d="M0.500 3L4.500 0.800 15.500 7V11.500L11 14 0.500 7.500Z" fill="#f5c518" stroke="#3a2c00" stroke-width="0.900"/><path d="M0.500 3L11 9.500V14M11 9.500L15.500 7" stroke="#3a2c00" stroke-width="0.800" fill="none"/><path d="M1.200 3.200L4.500 1.500 14.500 7 11 9Z" fill="#fbe37a"/><path d="M5 3L8.500 1 13.500 3.800V8.500L10 10.300 5 7.500Z" fill="#4f8fe8" stroke="#0a1f5a" stroke-width="0.900"/><path d="M5 3L10 5.800V10.300M10 5.800L13.500 3.800" stroke="#0a1f5a" stroke-width="0.700" fill="none"/><path d="M5.800 3.100L8.500 1.700 12.500 3.900 10 5.200Z" fill="#a9ccff"/><path d="M10.500 9.800H14V12.800H10.500Z" fill="#f8d84a" stroke="#3a2c00" stroke-width="0.600"/></svg><span class="t" style="left:48.3px;top:629.7px;font-size:12.5px;color:#111;transform:scaleX(0.955);">Rivestimento</span><svg class="b" style="left:31px;top:653px;" width="9" height="9" viewBox="0 0 9 9"><rect x="0.500" y="0.500" width="8" height="8" fill="#fff" stroke="#9a9a9a" stroke-width="1"/><path d="M2.500 4.500H6.500" stroke="#3b4a8a" stroke-width="1"/><path d="M4.500 2.500V6.500" stroke="#3b4a8a" stroke-width="1"/></svg><svg class="b" style="left:46.5px;top:650px;" width="16" height="15" viewBox="0 0 16 15"><path d="M0.500 9L3.500 6.500V3.500L6.500 0.500H11.500V4.500L14 4.500V10L8.500 14.500H0.500Z" fill="#2a7be6" stroke="#050a1e" stroke-width="1"/><path d="M3.500 3.500H8.500L11.500 0.500M8.500 3.500V8M3.500 6.500V8.500M0.500 9H8.500V14.500M8.500 9L14 4.500M8.500 8H3.500" stroke="#050a1e" stroke-width="0.800" fill="none"/><path d="M4 4H8V7.500H4Z" fill="#4a9cf5"/><path d="M1 9.500H8V11.500H1Z" fill="#5aa8f8"/><path d="M4.500 3L6.800 1H10.300L8.200 3Z" fill="#8cc4ff"/></svg><span class="t" style="left:67.5px;top:647.7px;font-size:12.5px;color:#111;transform:scaleX(0.843);">Riv 1</span><svg class="b" style="left:31px;top:671px;" width="9" height="9" viewBox="0 0 9 9"><rect x="0.500" y="0.500" width="8" height="8" fill="#fff" stroke="#9a9a9a" stroke-width="1"/><path d="M2.500 4.500H6.500" stroke="#3b4a8a" stroke-width="1"/><path d="M4.500 2.500V6.500" stroke="#3b4a8a" stroke-width="1"/></svg><svg class="b" style="left:46.5px;top:668px;" width="16" height="15" viewBox="0 0 16 15"><path d="M0.500 9L3.500 6.500V3.500L6.500 0.500H11.500V4.500L14 4.500V10L8.500 14.500H0.500Z" fill="#2a7be6" stroke="#050a1e" stroke-width="1"/><path d="M3.500 3.500H8.500L11.500 0.500M8.500 3.500V8M3.500 6.500V8.500M0.500 9H8.500V14.500M8.500 9L14 4.500M8.500 8H3.500" stroke="#050a1e" stroke-width="0.800" fill="none"/><path d="M4 4H8V7.500H4Z" fill="#4a9cf5"/><path d="M1 9.500H8V11.500H1Z" fill="#5aa8f8"/><path d="M4.500 3L6.800 1H10.300L8.200 3Z" fill="#8cc4ff"/></svg><span class="t" style="left:67.5px;top:665.7px;font-size:12.5px;color:#111;transform:scaleX(0.878);">Riv 2</span><svg class="b" style="left:31px;top:689px;" width="9" height="9" viewBox="0 0 9 9"><rect x="0.500" y="0.500" width="8" height="8" fill="#fff" stroke="#9a9a9a" stroke-width="1"/><path d="M2.500 4.500H6.500" stroke="#3b4a8a" stroke-width="1"/><path d="M4.500 2.500V6.500" stroke="#3b4a8a" stroke-width="1"/></svg><svg class="b" style="left:46.5px;top:686px;" width="16" height="15" viewBox="0 0 16 15"><path d="M0.500 9L3.500 6.500V3.500L6.500 0.500H11.500V4.500L14 4.500V10L8.500 14.500H0.500Z" fill="#2a7be6" stroke="#050a1e" stroke-width="1"/><path d="M3.500 3.500H8.500L11.500 0.500M8.500 3.500V8M3.500 6.500V8.500M0.500 9H8.500V14.500M8.500 9L14 4.500M8.500 8H3.500" stroke="#050a1e" stroke-width="0.800" fill="none"/><path d="M4 4H8V7.500H4Z" fill="#4a9cf5"/><path d="M1 9.500H8V11.500H1Z" fill="#5aa8f8"/><path d="M4.500 3L6.800 1H10.300L8.200 3Z" fill="#8cc4ff"/></svg><span class="t" style="left:67.5px;top:683.7px;font-size:12.5px;color:#111;transform:scaleX(0.878);">Riv 3</span><svg class="b" style="left:31px;top:707px;" width="9" height="9" viewBox="0 0 9 9"><rect x="0.500" y="0.500" width="8" height="8" fill="#fff" stroke="#9a9a9a" stroke-width="1"/><path d="M2.500 4.500H6.500" stroke="#3b4a8a" stroke-width="1"/><path d="M4.500 2.500V6.500" stroke="#3b4a8a" stroke-width="1"/></svg><svg class="b" style="left:46.5px;top:704px;" width="16" height="15" viewBox="0 0 16 15"><path d="M0.500 9L3.500 6.500V3.500L6.500 0.500H11.500V4.500L14 4.500V10L8.500 14.500H0.500Z" fill="#2a7be6" stroke="#050a1e" stroke-width="1"/><path d="M3.500 3.500H8.500L11.500 0.500M8.500 3.500V8M3.500 6.500V8.500M0.500 9H8.500V14.500M8.500 9L14 4.500M8.500 8H3.500" stroke="#050a1e" stroke-width="0.800" fill="none"/><path d="M4 4H8V7.500H4Z" fill="#4a9cf5"/><path d="M1 9.500H8V11.500H1Z" fill="#5aa8f8"/><path d="M4.500 3L6.800 1H10.300L8.200 3Z" fill="#8cc4ff"/></svg><span class="t" style="left:67.5px;top:701.7px;font-size:12.5px;color:#111;transform:scaleX(0.878);">Riv 4</span><svg class="b" style="left:31px;top:725px;" width="9" height="9" viewBox="0 0 9 9"><rect x="0.500" y="0.500" width="8" height="8" fill="#fff" stroke="#9a9a9a" stroke-width="1"/><path d="M2.500 4.500H6.500" stroke="#3b4a8a" stroke-width="1"/><path d="M4.500 2.500V6.500" stroke="#3b4a8a" stroke-width="1"/></svg><svg class="b" style="left:46.5px;top:722px;" width="16" height="15" viewBox="0 0 16 15"><path d="M0.500 9L3.500 6.500V3.500L6.500 0.500H11.500V4.500L14 4.500V10L8.500 14.500H0.500Z" fill="#2a7be6" stroke="#050a1e" stroke-width="1"/><path d="M3.500 3.500H8.500L11.500 0.500M8.500 3.500V8M3.500 6.500V8.500M0.500 9H8.500V14.500M8.500 9L14 4.500M8.500 8H3.500" stroke="#050a1e" stroke-width="0.800" fill="none"/><path d="M4 4H8V7.500H4Z" fill="#4a9cf5"/><path d="M1 9.500H8V11.500H1Z" fill="#5aa8f8"/><path d="M4.500 3L6.800 1H10.300L8.200 3Z" fill="#8cc4ff"/></svg><span class="t" style="left:67.5px;top:719.7px;font-size:12.5px;color:#111;transform:scaleX(0.878);">Riv 5</span><svg class="b" style="left:12px;top:743px;" width="9" height="9" viewBox="0 0 9 9"><rect x="0.500" y="0.500" width="8" height="8" fill="#fff" stroke="#9a9a9a" stroke-width="1"/><path d="M2.500 4.500H6.500" stroke="#3b4a8a" stroke-width="1"/></svg><svg class="b" style="left:27px;top:739.5px;" width="16" height="15" viewBox="0 0 16 15"><path d="M0.500 3L4.500 0.800 15.500 7V11.500L11 14 0.500 7.500Z" fill="#f5c518" stroke="#3a2c00" stroke-width="0.900"/><path d="M0.500 3L11 9.500V14M11 9.500L15.500 7" stroke="#3a2c00" stroke-width="0.800" fill="none"/><path d="M1.200 3.200L4.500 1.500 14.500 7 11 9Z" fill="#fbe37a"/><path d="M5 3L8.500 1 13.500 3.800V8.500L10 10.300 5 7.500Z" fill="#4f8fe8" stroke="#0a1f5a" stroke-width="0.900"/><path d="M5 3L10 5.800V10.300M10 5.800L13.500 3.800" stroke="#0a1f5a" stroke-width="0.700" fill="none"/><path d="M5.800 3.100L8.500 1.700 12.500 3.900 10 5.200Z" fill="#a9ccff"/><path d="M10.500 9.800H14V12.800H10.500Z" fill="#f8d84a" stroke="#3a2c00" stroke-width="0.600"/></svg><span class="t" style="left:48.3px;top:737.7px;font-size:12.5px;color:#111;transform:scaleX(0.959);">Poggia piedi</span><svg class="b" style="left:31px;top:761px;" width="9" height="9" viewBox="0 0 9 9"><rect x="0.500" y="0.500" width="8" height="8" fill="#fff" stroke="#9a9a9a" stroke-width="1"/><path d="M2.500 4.500H6.500" stroke="#3b4a8a" stroke-width="1"/><path d="M4.500 2.500V6.500" stroke="#3b4a8a" stroke-width="1"/></svg><svg class="b" style="left:46.5px;top:757.5px;" width="16" height="15" viewBox="0 0 16 15"><path d="M0.500 3L4.500 0.800 15.500 7V11.500L11 14 0.500 7.500Z" fill="#f5c518" stroke="#3a2c00" stroke-width="0.900"/><path d="M0.500 3L11 9.500V14M11 9.500L15.500 7" stroke="#3a2c00" stroke-width="0.800" fill="none"/><path d="M1.200 3.200L4.500 1.500 14.500 7 11 9Z" fill="#fbe37a"/><path d="M5 3L8.500 1 13.500 3.800V8.500L10 10.300 5 7.500Z" fill="#4f8fe8" stroke="#0a1f5a" stroke-width="0.900"/><path d="M5 3L10 5.800V10.300M10 5.800L13.500 3.800" stroke="#0a1f5a" stroke-width="0.700" fill="none"/><path d="M5.800 3.100L8.500 1.700 12.500 3.900 10 5.200Z" fill="#a9ccff"/><path d="M10.500 9.800H14V12.800H10.500Z" fill="#f8d84a" stroke="#3a2c00" stroke-width="0.600"/></svg><span class="t" style="left:67.5px;top:755.7px;font-size:12.5px;color:#111;transform:scaleX(0.780);">PP</span><svg class="b" style="left:31px;top:779px;" width="9" height="9" viewBox="0 0 9 9"><rect x="0.500" y="0.500" width="8" height="8" fill="#fff" stroke="#9a9a9a" stroke-width="1"/><path d="M2.500 4.500H6.500" stroke="#3b4a8a" stroke-width="1"/><path d="M4.500 2.500V6.500" stroke="#3b4a8a" stroke-width="1"/></svg><svg class="b" style="left:46.5px;top:775.5px;" width="16" height="15" viewBox="0 0 16 15"><path d="M0.500 3L4.500 0.800 15.500 7V11.500L11 14 0.500 7.500Z" fill="#f5c518" stroke="#3a2c00" stroke-width="0.900"/><path d="M0.500 3L11 9.500V14M11 9.500L15.500 7" stroke="#3a2c00" stroke-width="0.800" fill="none"/><path d="M1.200 3.200L4.500 1.500 14.500 7 11 9Z" fill="#fbe37a"/><path d="M5 3L8.500 1 13.500 3.800V8.500L10 10.300 5 7.500Z" fill="#4f8fe8" stroke="#0a1f5a" stroke-width="0.900"/><path d="M5 3L10 5.800V10.300M10 5.800L13.500 3.800" stroke="#0a1f5a" stroke-width="0.700" fill="none"/><path d="M5.800 3.100L8.500 1.700 12.500 3.900 10 5.200Z" fill="#a9ccff"/><path d="M10.500 9.800H14V12.800H10.500Z" fill="#f8d84a" stroke="#3a2c00" stroke-width="0.600"/></svg><span class="t" style="left:67.5px;top:773.7px;font-size:12.5px;color:#111;transform:scaleX(0.780);">PP</span><svg class="b" style="left:31px;top:797px;" width="9" height="9" viewBox="0 0 9 9"><rect x="0.500" y="0.500" width="8" height="8" fill="#fff" stroke="#9a9a9a" stroke-width="1"/><path d="M2.500 4.500H6.500" stroke="#3b4a8a" stroke-width="1"/><path d="M4.500 2.500V6.500" stroke="#3b4a8a" stroke-width="1"/></svg><svg class="b" style="left:46.5px;top:793.5px;" width="16" height="15" viewBox="0 0 16 15"><path d="M0.500 3L4.500 0.800 15.500 7V11.500L11 14 0.500 7.500Z" fill="#f5c518" stroke="#3a2c00" stroke-width="0.900"/><path d="M0.500 3L11 9.500V14M11 9.500L15.500 7" stroke="#3a2c00" stroke-width="0.800" fill="none"/><path d="M1.200 3.200L4.500 1.500 14.500 7 11 9Z" fill="#fbe37a"/><path d="M5 3L8.500 1 13.500 3.800V8.500L10 10.300 5 7.500Z" fill="#4f8fe8" stroke="#0a1f5a" stroke-width="0.900"/><path d="M5 3L10 5.800V10.300M10 5.800L13.500 3.800" stroke="#0a1f5a" stroke-width="0.700" fill="none"/><path d="M5.800 3.100L8.500 1.700 12.500 3.900 10 5.200Z" fill="#a9ccff"/><path d="M10.500 9.800H14V12.800H10.500Z" fill="#f8d84a" stroke="#3a2c00" stroke-width="0.600"/></svg><span class="t" style="left:67.5px;top:791.7px;font-size:12.5px;color:#111;transform:scaleX(0.780);">PP</span><svg class="b" style="left:12px;top:815px;" width="9" height="9" viewBox="0 0 9 9"><rect x="0.500" y="0.500" width="8" height="8" fill="#fff" stroke="#9a9a9a" stroke-width="1"/><path d="M2.500 4.500H6.500" stroke="#3b4a8a" stroke-width="1"/></svg><svg class="b" style="left:27px;top:811.5px;" width="16" height="15" viewBox="0 0 16 15"><path d="M0.500 3L4.500 0.800 15.500 7V11.500L11 14 0.500 7.500Z" fill="#f5c518" stroke="#3a2c00" stroke-width="0.900"/><path d="M0.500 3L11 9.500V14M11 9.500L15.500 7" stroke="#3a2c00" stroke-width="0.800" fill="none"/><path d="M1.200 3.200L4.500 1.500 14.500 7 11 9Z" fill="#fbe37a"/><path d="M5 3L8.500 1 13.500 3.800V8.500L10 10.300 5 7.500Z" fill="#4f8fe8" stroke="#0a1f5a" stroke-width="0.900"/><path d="M5 3L10 5.800V10.300M10 5.800L13.500 3.800" stroke="#0a1f5a" stroke-width="0.700" fill="none"/><path d="M5.800 3.100L8.500 1.700 12.500 3.900 10 5.200Z" fill="#a9ccff"/><path d="M10.500 9.800H14V12.800H10.500Z" fill="#f8d84a" stroke="#3a2c00" stroke-width="0.600"/></svg><span class="t" style="left:48.3px;top:809.7px;font-size:12.5px;color:#111;transform:scaleX(0.906);">M_dx3</span><svg class="b" style="left:31px;top:833px;" width="9" height="9" viewBox="0 0 9 9"><rect x="0.500" y="0.500" width="8" height="8" fill="#fff" stroke="#9a9a9a" stroke-width="1"/><path d="M2.500 4.500H6.500" stroke="#3b4a8a" stroke-width="1"/><path d="M4.500 2.500V6.500" stroke="#3b4a8a" stroke-width="1"/></svg><svg class="b" style="left:46.5px;top:830px;" width="16" height="15" viewBox="0 0 16 15"><path d="M0.500 9L3.500 6.500V3.500L6.500 0.500H11.500V4.500L14 4.500V10L8.500 14.500H0.500Z" fill="#2a7be6" stroke="#050a1e" stroke-width="1"/><path d="M3.500 3.500H8.500L11.500 0.500M8.500 3.500V8M3.500 6.500V8.500M0.500 9H8.500V14.500M8.500 9L14 4.500M8.500 8H3.500" stroke="#050a1e" stroke-width="0.800" fill="none"/><path d="M4 4H8V7.500H4Z" fill="#4a9cf5"/><path d="M1 9.500H8V11.500H1Z" fill="#5aa8f8"/><path d="M4.500 3L6.800 1H10.300L8.200 3Z" fill="#8cc4ff"/></svg></div><div class="b" style="left:213px;top:251px;width:2px;height:380px;background:#7a7a7a;"></div><div class="b" style="left:22px;top:841.5px;width:146px;height:2px;background:#8a8a8a;"></div><div class="b" style="left:3px;top:852px;width:58px;height:23px;background:#fcfcfc;border:1px solid #8a8a8a;border-top:none;"></div><svg class="b" style="left:9px;top:857px;" width="12" height="13" viewBox="0 0 12 13"><path d="M6 2L3.500 7M6 2L8.500 7M3.500 7L2 12M3.500 7L5 12M8.500 7L10 12" stroke="#9ab" stroke-width="0.700"/><g fill="#fff" stroke="#8aa" stroke-width="0.700"><rect x="5" y="0.500" width="2" height="2"/><rect x="2.500" y="6" width="2" height="2"/><rect x="7.500" y="6" width="2" height="2"/><rect x="1" y="10.500" width="2" height="2"/><rect x="4" y="10.500" width="2" height="2"/><rect x="9" y="10.500" width="2" height="2"/></g></svg><span class="t" style="left:25.0px;top:855.7px;font-size:12.5px;color:#333;transform:scaleX(0.875);">Scena</span><svg class="b" style="left:68px;top:856px;" width="15" height="15" viewBox="0 0 15 15"><circle cx="6" cy="6" r="4.500" fill="#eef4fb" stroke="#555" stroke-width="1.200"/><path d="M9.500 9.500L14 14" stroke="#555" stroke-width="2"/></svg><span class="t" style="left:85.5px;top:855.7px;font-size:12.5px;color:#444;transform:scaleX(0.885);">Cerca</span><svg class="b" style="left:128.5px;top:856px;" width="11" height="14" viewBox="0 0 11 14"><rect x="0.500" y="0.500" width="10" height="13" fill="#fff" stroke="#555" stroke-width="1"/><rect x="2" y="2" width="7" height="3" fill="#3b5fa0"/><path d="M2 7H5M6 7H9M2 9.500H5M6 9.500H9" stroke="#555" stroke-width="1"/></svg><span class="t" style="left:144.0px;top:855.7px;font-size:12.5px;color:#444;transform:scaleX(0.946);">Proprietà</span>
<!-- g_right -->
<div class="b" style="left:1326px;top:187px;width:6px;height:691px;background:#f0f0f0;"></div><div class="b" style="left:1330px;top:166px;width:267px;height:712px;background:#e8e8e8;"></div><span class="t" style="left:1336.5px;top:167.7px;font-size:12.5px;color:#444;transform:scaleX(0.916);">Oikema Eng</span><svg class="b" style="left:1563.5px;top:175px;" width="9" height="6" viewBox="0 0 9 6"><path d="M0 0H9L4.500 5Z" fill="#555"/></svg><svg class="b" style="left:1582px;top:172px;" width="9" height="11" viewBox="0 0 9 11"><path d="M2.500 0.500H6V5H2.500Z" fill="#666" stroke="#444" stroke-width="1"/><path d="M6.300 0.500V5" stroke="#333" stroke-width="1.400"/><path d="M0.800 5.500H8.200M4.500 5.500V9.500" stroke="#444" stroke-width="1.300" fill="none"/></svg><div class="b" style="left:1334px;top:191px;width:62px;height:16px;background:#f6f6f6;border:1px solid #dadada;border-radius:3px;"></div><svg class="b" style="left:1339px;top:192px;" width="14" height="14" viewBox="0 0 14 14"><rect x="1.500" y="0.500" width="11" height="13" fill="#fff" stroke="#777" stroke-width="1"/><rect x="3.500" y="3" width="2.500" height="2.500" fill="#999"/><rect x="8" y="3" width="2.500" height="2.500" fill="#999"/><rect x="3.500" y="8" width="2.500" height="2.500" fill="#999"/><rect x="8" y="8" width="2.500" height="2.500" fill="#999"/></svg><span class="t" style="left:1359.5px;top:190.7px;font-size:12.5px;color:#111;transform:scaleX(0.844);">Nuovo</span><div class="b" style="left:1400px;top:191px;width:62px;height:16px;background:#f6f6f6;border:1px solid #dadada;border-radius:3px;"></div><svg class="b" style="left:1405px;top:192px;" width="14" height="14" viewBox="0 0 14 14"><path d="M1 1H6V13H1Z" fill="#e4e4e4" stroke="#999" stroke-width="0.800"/><path d="M6 1L10 2.500V13L6 13Z" fill="#f4f4f4" stroke="#999" stroke-width="0.800"/><path d="M11 8L13 12 11.500 12" stroke="#889" stroke-width="0.800" fill="none"/></svg><span class="t" style="left:1432.0px;top:190.7px;font-size:12.5px;color:#111;transform:scaleX(0.787);">Apri</span><div class="b" style="left:1466px;top:191px;width:62px;height:16px;background:#f6f6f6;border:1px solid #dadada;border-radius:3px;"></div><svg class="b" style="left:1471px;top:192px;" width="14" height="14" viewBox="0 0 14 14"><rect x="1" y="3" width="10" height="10" rx="1" fill="#5b6b3a" stroke="#3a4720" stroke-width="0.600"/><rect x="3" y="3.500" width="6" height="4" fill="#e8e8e8"/><rect x="4" y="9.500" width="4" height="3.500" fill="#c9cfb8"/><rect x="6" y="0.500" width="7" height="6" fill="#f4f4f4" stroke="#aaa" stroke-width="0.600"/></svg><span class="t" style="left:1494.0px;top:190.7px;font-size:12.5px;color:#111;transform:scaleX(0.832);">Salva</span><div class="b" style="left:1532px;top:191px;width:62px;height:16px;background:#f6f6f6;border:1px solid #dadada;border-radius:3px;"></div><svg class="b" style="left:1537px;top:192px;" width="14" height="14" viewBox="0 0 14 14"><rect x="1" y="1" width="10" height="11" fill="#e6e6e6" stroke="#aaa" stroke-width="0.800"/><path d="M11 9L13 13" stroke="#bbb" stroke-width="0.800"/></svg><span class="t" style="left:1559.0px;top:190.7px;font-size:12.5px;color:#111;transform:scaleX(0.804);">Chiudi</span><div class="b" style="left:1332px;top:210px;width:243px;height:19px;background:#fff;"></div><span class="t" style="left:1337.5px;top:210.7px;font-size:12.5px;color:#777;transform:scaleX(0.880);">Cerca...</span><div class="b" style="left:1575px;top:211px;width:21px;height:17px;background:#f4f4f4;border:1px solid #d4d4d4;border-radius:3px;"></div><svg class="b" style="left:1579px;top:213.5px;" width="13" height="12" viewBox="0 0 13 12"><path d="M1 1L12 11M12 1L1 11" stroke="#f0532d" stroke-width="2"/></svg><div class="b" style="left:1332px;top:229px;width:265px;height:601px;background:#fff;border:1px solid #7a7a7a;border-right-color:#d0d0d0;border-bottom-color:#d0d0d0;"></div><div class="b" style="left:1580px;top:230px;width:16px;height:599px;background:#f3f3f3;"></div><div class="b" style="left:1586.5px;top:248px;width:2px;height:268px;background:#7a7a7a;"></div><svg class="b" style="left:1356.8px;top:234px;" width="32" height="32" viewBox="0 0 32 32"><g transform="translate(6 0)"><rect x="0.500" y="0.500" width="24" height="18" fill="#eaf3fc" stroke="#3f8ad6" stroke-width="1"/><rect x="0.500" y="0.500" width="24" height="3" fill="#5aa2e8"/><rect x="2" y="5" width="3" height="2.500" fill="#555"/><rect x="2" y="9" width="3" height="2.500" fill="#7aa"/><rect x="7" y="5" width="14" height="10" fill="#7fc3c9" stroke="#4a90c8" stroke-width="0.600"/></g><g transform="translate(0 6)"><path d="M0.500 14 V19 C0.500 23 17.500 23 17.500 19 V14 Z" fill="#aeb3ba" stroke="#7c828a" stroke-width="0.700"/><ellipse cx="9" cy="14" rx="8.500" ry="3.200" fill="#dfe2e6" stroke="#7c828a" stroke-width="0.700"/><path d="M0.500 8 V13 C0.500 17 17.500 17 17.500 13 V8 Z" fill="#aeb3ba" stroke="#7c828a" stroke-width="0.700"/><ellipse cx="9" cy="8" rx="8.500" ry="3.200" fill="#dfe2e6" stroke="#7c828a" stroke-width="0.700"/><path d="M0.500 2 V7 C0.500 11 17.500 11 17.500 7 V2 Z" fill="#aeb3ba" stroke="#7c828a" stroke-width="0.700"/><ellipse cx="9" cy="2" rx="8.500" ry="3.200" fill="#dfe2e6" stroke="#7c828a" stroke-width="0.700"/></g><rect x="15.500" y="11.500" width="15" height="17" rx="1" fill="#c5c9cf" stroke="#7c828a" stroke-width="0.800"/><rect x="17.500" y="13.500" width="11" height="6" fill="#e4e7ea" stroke="#8a9098" stroke-width="0.600"/><rect x="17.500" y="21" width="11" height="6" fill="#e4e7ea" stroke="#8a9098" stroke-width="0.600"/><path d="M21 16H25M21 23.500H25" stroke="#6a7078" stroke-width="1.200"/></svg><span class="t" style="left:1349.5px;top:267.9px;font-size:12.5px;color:#0c0c14;transform:scaleX(0.930);">Gestione</span><span class="t" style="left:1353.4px;top:282.9px;font-size:12.5px;color:#0c0c14;transform:scaleX(0.930);">Librerie</span><svg class="b" style="left:1432px;top:234px;" width="32" height="32" viewBox="0 0 32 32"><g transform="translate(6 0)"><rect x="0.500" y="0.500" width="24" height="18" fill="#eaf3fc" stroke="#3f8ad6" stroke-width="1"/><rect x="0.500" y="0.500" width="24" height="3" fill="#5aa2e8"/><rect x="2" y="5" width="3" height="2.500" fill="#555"/><rect x="2" y="9" width="3" height="2.500" fill="#7aa"/><rect x="7" y="5" width="14" height="10" fill="#7fc3c9" stroke="#4a90c8" stroke-width="0.600"/></g><g transform="translate(0 6)"><path d="M0.500 14 V19 C0.500 23 17.500 23 17.500 19 V14 Z" fill="#aeb3ba" stroke="#7c828a" stroke-width="0.700"/><ellipse cx="9" cy="14" rx="8.500" ry="3.200" fill="#dfe2e6" stroke="#7c828a" stroke-width="0.700"/><path d="M0.500 8 V13 C0.500 17 17.500 17 17.500 13 V8 Z" fill="#aeb3ba" stroke="#7c828a" stroke-width="0.700"/><ellipse cx="9" cy="8" rx="8.500" ry="3.200" fill="#dfe2e6" stroke="#7c828a" stroke-width="0.700"/><path d="M0.500 2 V7 C0.500 11 17.500 11 17.500 7 V2 Z" fill="#aeb3ba" stroke="#7c828a" stroke-width="0.700"/><ellipse cx="9" cy="2" rx="8.500" ry="3.200" fill="#dfe2e6" stroke="#7c828a" stroke-width="0.700"/></g><rect x="17.500" y="15.500" width="11" height="13" fill="#e6f0fb" stroke="#3f8ad6" stroke-width="1"/><rect x="20" y="18" width="6" height="5" fill="#5aa2e8"/><path d="M30.97 26.52 L30.97 27.48 L29.80 27.66 L29.45 28.51 L30.15 29.47 L29.47 30.15 L28.51 29.45 L27.66 29.80 L27.48 30.97 L26.52 30.97 L26.34 29.80 L25.49 29.45 L24.53 30.15 L23.85 29.47 L24.55 28.51 L24.20 27.66 L23.03 27.48 L23.03 26.52 L24.20 26.34 L24.55 25.49 L23.85 24.53 L24.53 23.85 L25.49 24.55 L26.34 24.20 L26.52 23.03 L27.48 23.03 L27.66 24.20 L28.51 24.55 L29.47 23.85 L30.15 24.53 L29.45 25.49 L29.80 26.34 Z" fill="#aab" stroke="#667" stroke-width="0.600"/><circle cx="27" cy="27" r="1.28" fill="#fff" stroke="#667" stroke-width="0.600"/></svg><span class="t" style="left:1428.6px;top:267.9px;font-size:12.5px;color:#0c0c14;transform:scaleX(0.930);">Libreria</span><span class="t" style="left:1418.0px;top:282.9px;font-size:12.5px;color:#0c0c14;transform:scaleX(0.930);">Ferramenta</span><svg class="b" style="left:1507px;top:234px;" width="32" height="32" viewBox="0 0 32 32"><g transform="translate(8 1)"><rect x="0.500" y="0.500" width="23" height="17" fill="#f4f6f9" stroke="#3f8ad6" stroke-width="1"/><rect x="0.500" y="0.500" width="23" height="3" fill="#5aa2e8"/><rect x="2" y="5" width="3" height="2.500" fill="#555"/><rect x="2" y="9" width="3" height="2.500" fill="#7aa"/><rect x="7" y="5" width="13" height="9" fill="#7fc3c9" stroke="#4a90c8" stroke-width="0.600"/></g><g transform="translate(0 6)"><path d="M0.500 14 V19 C0.500 23 17.500 23 17.500 19 V14 Z" fill="#aeb3ba" stroke="#7c828a" stroke-width="0.700"/><ellipse cx="9" cy="14" rx="8.500" ry="3.200" fill="#dfe2e6" stroke="#7c828a" stroke-width="0.700"/><path d="M0.500 8 V13 C0.500 17 17.500 17 17.500 13 V8 Z" fill="#aeb3ba" stroke="#7c828a" stroke-width="0.700"/><ellipse cx="9" cy="8" rx="8.500" ry="3.200" fill="#dfe2e6" stroke="#7c828a" stroke-width="0.700"/><path d="M0.500 2 V7 C0.500 11 17.500 11 17.500 7 V2 Z" fill="#aeb3ba" stroke="#7c828a" stroke-width="0.700"/><ellipse cx="9" cy="2" rx="8.500" ry="3.200" fill="#dfe2e6" stroke="#7c828a" stroke-width="0.700"/></g><rect x="20" y="17" width="11" height="13" fill="#9a6238" stroke="#6a3f1e" stroke-width="0.700"/><path d="M20 21H31M20 25H31" stroke="#6a3f1e" stroke-width="0.600"/><g transform="translate(15 12)"><rect x="0.500" y="0.500" width="12" height="12" fill="#f2f2f2" stroke="#9a9a9a" stroke-width="0.800"/><rect x="2" y="2" width="4" height="4" fill="#2fc26a"/><rect x="7" y="2" width="4" height="4" fill="#a63ae8"/><rect x="2" y="7" width="4" height="4" fill="#ee2a2a"/><rect x="7" y="7" width="4" height="4" fill="#f5a81c"/></g></svg><span class="t" style="left:1502.3px;top:267.9px;font-size:12.5px;color:#0c0c14;transform:scaleX(0.930);">Imposta</span><span class="t" style="left:1501.0px;top:282.9px;font-size:12.5px;color:#0c0c14;transform:scaleX(0.930);">Materiali</span><svg class="b" style="left:1356.8px;top:309px;" width="32" height="32" viewBox="0 0 32 32"><rect x="8" y="1" width="22" height="22" fill="#b4663f" stroke="#7d4526" stroke-width="0.800"/><path d="M19 1V23M8 9H30" stroke="#7d4526" stroke-width="0.700"/><rect x="10" y="3" width="7" height="5" fill="#cf8258"/><rect x="21" y="3" width="7" height="5" fill="#cf8258"/><g transform="translate(0 6)"><path d="M0.500 14 V19 C0.500 23 17.500 23 17.500 19 V14 Z" fill="#aeb3ba" stroke="#7c828a" stroke-width="0.700"/><ellipse cx="9" cy="14" rx="8.500" ry="3.200" fill="#dfe2e6" stroke="#7c828a" stroke-width="0.700"/><path d="M0.500 8 V13 C0.500 17 17.500 17 17.500 13 V8 Z" fill="#aeb3ba" stroke="#7c828a" stroke-width="0.700"/><ellipse cx="9" cy="8" rx="8.500" ry="3.200" fill="#dfe2e6" stroke="#7c828a" stroke-width="0.700"/><path d="M0.500 2 V7 C0.500 11 17.500 11 17.500 7 V2 Z" fill="#aeb3ba" stroke="#7c828a" stroke-width="0.700"/><ellipse cx="9" cy="2" rx="8.500" ry="3.200" fill="#dfe2e6" stroke="#7c828a" stroke-width="0.700"/></g><rect x="17.500" y="17.500" width="12" height="12" rx="1" fill="#2f7fd6" stroke="#1b4f96" stroke-width="0.800"/><rect x="20" y="18" width="7" height="4" fill="#e8f0fa"/><rect x="20.500" y="24" width="6" height="5" fill="#cfe0f5"/></svg><span class="t" style="left:1352.1px;top:342.9px;font-size:12.5px;color:#0c0c14;transform:scaleX(0.930);">Salva in</span><span class="t" style="left:1353.4px;top:357.9px;font-size:12.5px;color:#0c0c14;transform:scaleX(0.930);">Libreria</span><svg class="b" style="left:1432px;top:309px;" width="32" height="32" viewBox="0 0 32 32"><g transform="translate(1 0)"><rect x="0.500" y="0.500" width="28" height="22" fill="#f4f6f9" stroke="#3f8ad6" stroke-width="1"/><rect x="0.500" y="0.500" width="28" height="3" fill="#5aa2e8"/><rect x="2" y="5" width="3" height="2.500" fill="#555"/><rect x="2" y="9" width="3" height="2.500" fill="#7aa"/><rect x="7" y="5" width="18" height="14" fill="#7fc3c9" stroke="#4a90c8" stroke-width="0.600"/></g><g transform="translate(12 12)"><path d="M0 6L12 2 19 5V17L7 20 0 17Z" fill="#b4663f" stroke="#7d4526" stroke-width="0.800"/><path d="M0 6L7 9 19 5M0 10L7 13 19 9M0 14L7 17 19 13M7 9V20" stroke="#7d4526" stroke-width="0.600" fill="none"/><path d="M0 6L12 2 19 5 7 9Z" fill="#cf8258"/></g><path d="M3 28L14 17" stroke="#555" stroke-width="2.200"/><path d="M12 15L16 19" stroke="#f0b429" stroke-width="4"/></svg><span class="t" style="left:1428.0px;top:342.9px;font-size:12.5px;color:#0c0c14;transform:scaleX(0.930);">Cambia</span><span class="t" style="left:1413.1px;top:357.9px;font-size:12.5px;color:#0c0c14;transform:scaleX(0.930);">Materiale al...</span><svg class="b" style="left:1507px;top:309px;" width="32" height="32" viewBox="0 0 32 32"><g transform="translate(0 12)"><path d="M0.500 8.500L16.500 0.500 31 6.700 12.500 14Z" fill="#f2cfa4" stroke="#b07a4a" stroke-width="0.800"/><path d="M0.500 8.500L12.500 14V20L0.500 14.500Z" fill="#e8b98a" stroke="#b07a4a" stroke-width="0.800"/><path d="M12.500 14L31 6.700V12.500L12.500 20Z" fill="#dca878" stroke="#b07a4a" stroke-width="0.800"/></g><rect x="6" y="5" width="10" height="10" fill="#9a6238" stroke="#6a3f1e" stroke-width="0.600"/><g transform="translate(2 1)"><rect x="0.500" y="0.500" width="12" height="12" fill="#f2f2f2" stroke="#9a9a9a" stroke-width="0.800"/><rect x="2" y="2" width="4" height="4" fill="#2fc26a"/><rect x="7" y="2" width="4" height="4" fill="#a63ae8"/><rect x="2" y="7" width="4" height="4" fill="#ee2a2a"/><rect x="7" y="7" width="4" height="4" fill="#f5a81c"/></g><path d="M15 5H20C25 5 27 8 27 12V14H30L24.500 20 19 14H22V12C22 10.500 21 10 20 10H15Z" fill="#7cc243" stroke="#3e8a1c" stroke-width="0.800"/></svg><span class="t" style="left:1503.9px;top:342.9px;font-size:12.5px;color:#0c0c14;transform:scaleX(0.930);">Applica</span><span class="t" style="left:1497.5px;top:357.9px;font-size:12.5px;color:#0c0c14;transform:scaleX(0.930);">Bordatura</span><svg class="b" style="left:1356.8px;top:384px;" width="32" height="32" viewBox="0 0 32 32"><g transform="translate(0 12)"><path d="M0.500 8.500L16.500 0.500 31 6.700 12.500 14Z" fill="#f7dcc0" stroke="#d89a6a" stroke-width="0.800"/><path d="M0.500 8.500L12.500 14V20L0.500 14.500Z" fill="#f2c9a8" stroke="#d89a6a" stroke-width="0.800"/><path d="M12.500 14L31 6.700V12.500L12.500 20Z" fill="#ecc09a" stroke="#d89a6a" stroke-width="0.800"/></g><rect x="6" y="5" width="10" height="10" fill="#9a6238" stroke="#6a3f1e" stroke-width="0.600"/><g transform="translate(2 1)"><rect x="0.500" y="0.500" width="12" height="12" fill="#f2f2f2" stroke="#9a9a9a" stroke-width="0.800"/><rect x="2" y="2" width="4" height="4" fill="#2fc26a"/><rect x="7" y="2" width="4" height="4" fill="#a63ae8"/><rect x="2" y="7" width="4" height="4" fill="#ee2a2a"/><rect x="7" y="7" width="4" height="4" fill="#f5a81c"/></g><path d="M15 5H20C25 5 27 8 27 12V14H30L24.500 20 19 14H22V12C22 10.500 21 10 20 10H15Z" fill="#7cc243" stroke="#3e8a1c" stroke-width="0.800"/></svg><span class="t" style="left:1353.7px;top:417.9px;font-size:12.5px;color:#0c0c14;transform:scaleX(0.930);">Applica</span><span class="t" style="left:1339.2px;top:432.9px;font-size:12.5px;color:#0c0c14;transform:scaleX(0.930);">Rivestimento</span><svg class="b" style="left:1432px;top:384px;" width="32" height="32" viewBox="0 0 32 32"><g transform="translate(3 0)"><rect x="0.500" y="0.500" width="25" height="16" fill="#f4f6f9" stroke="#3f8ad6" stroke-width="1"/><rect x="0.500" y="0.500" width="25" height="3" fill="#5aa2e8"/><rect x="2" y="5" width="3" height="2.500" fill="#555"/><rect x="2" y="9" width="3" height="2.500" fill="#7aa"/><rect x="7" y="5" width="15" height="8" fill="#7fc3c9" stroke="#4a90c8" stroke-width="0.600"/></g><g transform="translate(0 12)"><path d="M0.500 8.500L16.500 0.500 31 6.700 12.500 14Z" fill="#cf8258" stroke="#7d4526" stroke-width="0.800"/><path d="M0.500 8.500L12.500 14V20L0.500 14.500Z" fill="#b4663f" stroke="#7d4526" stroke-width="0.800"/><path d="M12.500 14L31 6.700V12.500L12.500 20Z" fill="#a65a36" stroke="#7d4526" stroke-width="0.800"/></g></svg><span class="t" style="left:1425.4px;top:417.9px;font-size:12.5px;color:#0c0c14;transform:scaleX(0.930);">Pannello</span><svg class="b" style="left:1507px;top:384px;" width="32" height="32" viewBox="0 0 32 32"><g transform="translate(0 12)"><path d="M0.500 8.500L16.500 0.500 31 6.700 12.500 14Z" fill="#cf8258" stroke="#7d4526" stroke-width="0.800"/><path d="M0.500 8.500L12.500 14V20L0.500 14.500Z" fill="#b4663f" stroke="#7d4526" stroke-width="0.800"/><path d="M12.500 14L31 6.700V12.500L12.500 20Z" fill="#a65a36" stroke="#7d4526" stroke-width="0.800"/></g><path d="M15.96 12.28 L15.96 13.72 L14.20 14.00 L13.68 15.27 L14.72 16.70 L13.70 17.72 L12.27 16.68 L11.00 17.20 L10.72 18.96 L9.28 18.96 L9.00 17.20 L7.73 16.68 L6.30 17.72 L5.28 16.70 L6.32 15.27 L5.80 14.00 L4.04 13.72 L4.04 12.28 L5.80 12.00 L6.32 10.73 L5.28 9.30 L6.30 8.28 L7.73 9.32 L9.00 8.80 L9.28 7.04 L10.72 7.04 L11.00 8.80 L12.27 9.32 L13.70 8.28 L14.72 9.30 L13.68 10.73 L14.20 12.00 Z" fill="#c9c9c9" stroke="#808080" stroke-width="0.600"/><circle cx="10" cy="13" r="1.92" fill="#fff" stroke="#808080" stroke-width="0.600"/></svg><span class="t" style="left:1497.8px;top:417.9px;font-size:12.5px;color:#0c0c14;transform:scaleX(0.930);">Posiziona</span><span class="t" style="left:1493.0px;top:432.9px;font-size:12.5px;color:#0c0c14;transform:scaleX(0.930);">Ferramenta</span><svg class="b" style="left:1356.8px;top:459px;" width="32" height="32" viewBox="0 0 32 32"><g transform="translate(0 12)"><path d="M0.500 8.500L16.500 0.500 31 6.700 12.500 14Z" fill="#cf8258" stroke="#7d4526" stroke-width="0.800"/><path d="M0.500 8.500L12.500 14V20L0.500 14.500Z" fill="#b4663f" stroke="#7d4526" stroke-width="0.800"/><path d="M12.500 14L31 6.700V12.500L12.500 20Z" fill="#a65a36" stroke="#7d4526" stroke-width="0.800"/></g><path d="M25.46 10.34 L25.46 11.66 L23.85 11.91 L23.37 13.08 L24.33 14.40 L23.40 15.33 L22.08 14.37 L20.91 14.85 L20.66 16.46 L19.34 16.46 L19.09 14.85 L17.92 14.37 L16.60 15.33 L15.67 14.40 L16.63 13.08 L16.15 11.91 L14.54 11.66 L14.54 10.34 L16.15 10.09 L16.63 8.92 L15.67 7.60 L16.60 6.67 L17.92 7.63 L19.09 7.15 L19.34 5.54 L20.66 5.54 L20.91 7.15 L22.08 7.63 L23.40 6.67 L24.33 7.60 L23.37 8.92 L23.85 10.09 Z" fill="#e6e6e6" stroke="#b0b0b0" stroke-width="0.600"/><circle cx="20" cy="11" r="1.76" fill="#fff" stroke="#b0b0b0" stroke-width="0.600"/><path d="M14.96 15.28 L14.96 16.72 L13.20 17.00 L12.68 18.27 L13.72 19.70 L12.70 20.72 L11.27 19.68 L10.00 20.20 L9.72 21.96 L8.28 21.96 L8.00 20.20 L6.73 19.68 L5.30 20.72 L4.28 19.70 L5.32 18.27 L4.80 17.00 L3.04 16.72 L3.04 15.28 L4.80 15.00 L5.32 13.73 L4.28 12.30 L5.30 11.28 L6.73 12.32 L8.00 11.80 L8.28 10.04 L9.72 10.04 L10.00 11.80 L11.27 12.32 L12.70 11.28 L13.72 12.30 L12.68 13.73 L13.20 15.00 Z" fill="#c9c9c9" stroke="#808080" stroke-width="0.600"/><circle cx="9" cy="16" r="1.92" fill="#fff" stroke="#808080" stroke-width="0.600"/><circle cx="14" cy="6" r="5" fill="#5fb62f" stroke="#2f7a12" stroke-width="0.700"/><path d="M11 6H17M14 3V9" stroke="#fff" stroke-width="1.800"/></svg><span class="t" style="left:1357.6px;top:492.9px;font-size:12.5px;color:#0c0c14;transform:scaleX(0.930);">Copia</span><span class="t" style="left:1342.8px;top:507.9px;font-size:12.5px;color:#0c0c14;transform:scaleX(0.930);">Ferramenta</span><svg class="b" style="left:1432px;top:459px;" width="32" height="32" viewBox="0 0 32 32"><g transform="translate(0 12)"><path d="M0.500 8.500L16.500 0.500 31 6.700 12.500 14Z" fill="#cf8258" stroke="#7d4526" stroke-width="0.800"/><path d="M0.500 8.500L12.500 14V20L0.500 14.500Z" fill="#b4663f" stroke="#7d4526" stroke-width="0.800"/><path d="M12.500 14L31 6.700V12.500L12.500 20Z" fill="#a65a36" stroke="#7d4526" stroke-width="0.800"/></g><path d="M15.96 13.28 L15.96 14.72 L14.20 15.00 L13.68 16.27 L14.72 17.70 L13.70 18.72 L12.27 17.68 L11.00 18.20 L10.72 19.96 L9.28 19.96 L9.00 18.20 L7.73 17.68 L6.30 18.72 L5.28 17.70 L6.32 16.27 L5.80 15.00 L4.04 14.72 L4.04 13.28 L5.80 13.00 L6.32 11.73 L5.28 10.30 L6.30 9.28 L7.73 10.32 L9.00 9.80 L9.28 8.04 L10.72 8.04 L11.00 9.80 L12.27 10.32 L13.70 9.28 L14.72 10.30 L13.68 11.73 L14.20 13.00 Z" fill="#c9c9c9" stroke="#808080" stroke-width="0.600"/><circle cx="10" cy="14" r="1.92" fill="#fff" stroke="#808080" stroke-width="0.600"/><g transform="translate(15 18) rotate(-43.0251)"><rect x="4" y="-2" width="13.5183" height="4" fill="#f5a623" stroke="#a8690c" stroke-width="0.600"/><path d="M4 -2L0 0 4 2Z" fill="#f0d9b0" stroke="#8a6a3a" stroke-width="0.500"/><rect x="17.5183" y="-2" width="3" height="4" fill="#e28ac0" stroke="#8a4a70" stroke-width="0.500"/></g></svg><span class="t" style="left:1426.4px;top:492.9px;font-size:12.5px;color:#0c0c14;transform:scaleX(0.930);">Modifica</span><span class="t" style="left:1418.0px;top:507.9px;font-size:12.5px;color:#0c0c14;transform:scaleX(0.930);">Ferramenta</span><svg class="b" style="left:1507px;top:459px;" width="32" height="32" viewBox="0 0 32 32"><g transform="translate(0 12)"><path d="M0.500 8.500L16.500 0.500 31 6.700 12.500 14Z" fill="#cf8258" stroke="#7d4526" stroke-width="0.800"/><path d="M0.500 8.500L12.500 14V20L0.500 14.500Z" fill="#b4663f" stroke="#7d4526" stroke-width="0.800"/><path d="M12.500 14L31 6.700V12.500L12.500 20Z" fill="#a65a36" stroke="#7d4526" stroke-width="0.800"/></g><path d="M14.96 9.28 L14.96 10.72 L13.20 11.00 L12.68 12.27 L13.72 13.70 L12.70 14.72 L11.27 13.68 L10.00 14.20 L9.72 15.96 L8.28 15.96 L8.00 14.20 L6.73 13.68 L5.30 14.72 L4.28 13.70 L5.32 12.27 L4.80 11.00 L3.04 10.72 L3.04 9.28 L4.80 9.00 L5.32 7.73 L4.28 6.30 L5.30 5.28 L6.73 6.32 L8.00 5.80 L8.28 4.04 L9.72 4.04 L10.00 5.80 L11.27 6.32 L12.70 5.28 L13.72 6.30 L12.68 7.73 L13.20 9.00 Z" fill="#c9c9c9" stroke="#808080" stroke-width="0.600"/><circle cx="9" cy="10" r="1.92" fill="#fff" stroke="#808080" stroke-width="0.600"/><path d="M29.96 19.28 L29.96 20.72 L28.20 21.00 L27.68 22.27 L28.72 23.70 L27.70 24.72 L26.27 23.68 L25.00 24.20 L24.72 25.96 L23.28 25.96 L23.00 24.20 L21.73 23.68 L20.30 24.72 L19.28 23.70 L20.32 22.27 L19.80 21.00 L18.04 20.72 L18.04 19.28 L19.80 19.00 L20.32 17.73 L19.28 16.30 L20.30 15.28 L21.73 16.32 L23.00 15.80 L23.28 14.04 L24.72 14.04 L25.00 15.80 L26.27 16.32 L27.70 15.28 L28.72 16.30 L27.68 17.73 L28.20 19.00 Z" fill="#c9c9c9" stroke="#808080" stroke-width="0.600"/><circle cx="24" cy="20" r="1.92" fill="#fff" stroke="#808080" stroke-width="0.600"/><path d="M12 3H19V0.500L25 5 19 9.500V7H12Z" fill="#7cc243" stroke="#3e8a1c" stroke-width="0.700"/><path d="M20 25H13V22.500L7 27 13 31.500V29H20Z" fill="#7cc243" stroke="#3e8a1c" stroke-width="0.700"/></svg><span class="t" style="left:1496.8px;top:492.9px;font-size:12.5px;color:#0c0c14;transform:scaleX(0.930);">Sostituisci</span><span class="t" style="left:1493.0px;top:507.9px;font-size:12.5px;color:#0c0c14;transform:scaleX(0.930);">Ferramenta</span><svg class="b" style="left:1356.8px;top:534px;" width="32" height="32" viewBox="0 0 32 32"><g transform="translate(0 12)"><path d="M0.500 8.500L16.500 0.500 31 6.700 12.500 14Z" fill="#cf8258" stroke="#7d4526" stroke-width="0.800"/><path d="M0.500 8.500L12.500 14V20L0.500 14.500Z" fill="#b4663f" stroke="#7d4526" stroke-width="0.800"/><path d="M12.500 14L31 6.700V12.500L12.500 20Z" fill="#a65a36" stroke="#7d4526" stroke-width="0.800"/></g><path d="M16.46 13.34 L16.46 14.66 L14.85 14.91 L14.37 16.08 L15.33 17.40 L14.40 18.33 L13.08 17.37 L11.91 17.85 L11.66 19.46 L10.34 19.46 L10.09 17.85 L8.92 17.37 L7.60 18.33 L6.67 17.40 L7.63 16.08 L7.15 14.91 L5.54 14.66 L5.54 13.34 L7.15 13.09 L7.63 11.92 L6.67 10.60 L7.60 9.67 L8.92 10.63 L10.09 10.15 L10.34 8.54 L11.66 8.54 L11.91 10.15 L13.08 10.63 L14.40 9.67 L15.33 10.60 L14.37 11.92 L14.85 13.09 Z" fill="#c9c9c9" stroke="#808080" stroke-width="0.600"/><circle cx="11" cy="14" r="1.76" fill="#fff" stroke="#808080" stroke-width="0.600"/><path d="M14 3A11 9 0 0 1 28 16L31 16 26 22 21 16H24A7.500 6 0 0 0 14 7Z" fill="#5b8fe6" stroke="#2a55a8" stroke-width="0.700"/><path d="M20 29A11 9 0 0 1 5 18L2 18 7 12 12 18H9A7.500 6 0 0 0 20 25Z" fill="#5b8fe6" stroke="#2a55a8" stroke-width="0.700"/></svg><span class="t" style="left:1349.5px;top:567.9px;font-size:12.5px;color:#0c0c14;transform:scaleX(0.930);">Aggiorna</span><span class="t" style="left:1342.8px;top:582.9px;font-size:12.5px;color:#0c0c14;transform:scaleX(0.930);">Ferramenta</span><svg class="b" style="left:1432px;top:534px;" width="32" height="32" viewBox="0 0 32 32"><g transform="translate(0 12)"><path d="M0.500 8.500L16.500 0.500 31 6.700 12.500 14Z" fill="#cf8258" stroke="#7d4526" stroke-width="0.800"/><path d="M0.500 8.500L12.500 14V20L0.500 14.500Z" fill="#b4663f" stroke="#7d4526" stroke-width="0.800"/><path d="M12.500 14L31 6.700V12.500L12.500 20Z" fill="#a65a36" stroke="#7d4526" stroke-width="0.800"/></g><path d="M14.96 12.28 L14.96 13.72 L13.20 14.00 L12.68 15.27 L13.72 16.70 L12.70 17.72 L11.27 16.68 L10.00 17.20 L9.72 18.96 L8.28 18.96 L8.00 17.20 L6.73 16.68 L5.30 17.72 L4.28 16.70 L5.32 15.27 L4.80 14.00 L3.04 13.72 L3.04 12.28 L4.80 12.00 L5.32 10.73 L4.28 9.30 L5.30 8.28 L6.73 9.32 L8.00 8.80 L8.28 7.04 L9.72 7.04 L10.00 8.80 L11.27 9.32 L12.70 8.28 L13.72 9.30 L12.68 10.73 L13.20 12.00 Z" fill="#c9c9c9" stroke="#808080" stroke-width="0.600"/><circle cx="9" cy="13" r="1.92" fill="#fff" stroke="#808080" stroke-width="0.600"/><path d="M14 8C18 3 26 3 30 8C26 13 18 13 14 8Z" fill="#fff" stroke="#a0622a" stroke-width="1"/><circle cx="22" cy="8" r="2.600" fill="#3a6fb8"/><circle cx="22" cy="8" r="1.100" fill="#111"/></svg><span class="t" style="left:1417.0px;top:567.9px;font-size:12.5px;color:#0c0c14;transform:scaleX(0.930);">Accendi/S...</span><span class="t" style="left:1418.0px;top:582.9px;font-size:12.5px;color:#0c0c14;transform:scaleX(0.930);">Ferramenta</span><svg class="b" style="left:1507px;top:534px;" width="32" height="32" viewBox="0 0 32 32"><rect x="2.500" y="1.500" width="27" height="29" fill="#b4663f" stroke="#7d4526" stroke-width="0.900"/><rect x="4.500" y="3.500" width="11" height="25" fill="#cf8258" stroke="#7d4526" stroke-width="0.600"/><rect x="19" y="8" width="6" height="20" fill="#d9eef5" stroke="#7d4526" stroke-width="0.600"/><rect x="26" y="3.500" width="2.500" height="25" fill="#cf8258"/><path d="M6 12H14M6 18H14M6 24H14" stroke="#7d4526" stroke-width="0.700"/><path d="M8 8C12 3 20 3 24 8C20 13 12 13 8 8Z" fill="#fff" stroke="#a0622a" stroke-width="1"/><circle cx="16" cy="8" r="2.600" fill="#3a6fb8"/><circle cx="16" cy="8" r="1.100" fill="#111"/></svg><span class="t" style="left:1492.0px;top:567.9px;font-size:12.5px;color:#0c0c14;transform:scaleX(0.930);">Accendi/S...</span><span class="t" style="left:1506.5px;top:582.9px;font-size:12.5px;color:#0c0c14;transform:scaleX(0.930);">Antine</span><svg class="b" style="left:1356.8px;top:609px;" width="32" height="32" viewBox="0 0 32 32"><g transform="translate(0 12)"><path d="M0.500 8.500L16.500 0.500 31 6.700 12.500 14Z" fill="#cf8258" stroke="#7d4526" stroke-width="0.800"/><path d="M0.500 8.500L12.500 14V20L0.500 14.500Z" fill="#b4663f" stroke="#7d4526" stroke-width="0.800"/><path d="M12.500 14L31 6.700V12.500L12.500 20Z" fill="#a65a36" stroke="#7d4526" stroke-width="0.800"/></g><ellipse cx="12" cy="22" rx="3" ry="1.400" fill="#e8b090" stroke="#7d4526" stroke-width="0.600"/><rect x="9" y="0" width="6" height="4" fill="#d23a3a" stroke="#7a1a1a" stroke-width="0.600"/><rect x="10" y="4" width="4" height="6" fill="#444"/><path d="M10 10H14L12 20Z" fill="#bfc4ca" stroke="#666" stroke-width="0.600"/></svg><span class="t" style="left:1339.8px;top:642.9px;font-size:12.5px;color:#0c0c14;transform:scaleX(0.930);">Foro Singolo</span><svg class="b" style="left:1432px;top:609px;" width="32" height="32" viewBox="0 0 32 32"><g transform="translate(0 12)"><path d="M0.500 8.500L16.500 0.500 31 6.700 12.500 14Z" fill="#cf8258" stroke="#7d4526" stroke-width="0.800"/><path d="M0.500 8.500L12.500 14V20L0.500 14.500Z" fill="#b4663f" stroke="#7d4526" stroke-width="0.800"/><path d="M12.500 14L31 6.700V12.500L12.500 20Z" fill="#a65a36" stroke="#7d4526" stroke-width="0.800"/></g><ellipse cx="11" cy="21" rx="2.600" ry="1.200" fill="#e8b090" stroke="#7d4526" stroke-width="0.600"/><ellipse cx="19" cy="23" rx="2.600" ry="1.200" fill="#e8b090" stroke="#7d4526" stroke-width="0.600"/><rect x="8" y="0" width="6" height="4" fill="#d23a3a" stroke="#7a1a1a" stroke-width="0.600"/><rect x="9" y="4" width="4" height="6" fill="#444"/><path d="M9 10H13L11 20Z" fill="#bfc4ca" stroke="#666" stroke-width="0.600"/></svg><span class="t" style="left:1418.3px;top:642.9px;font-size:12.5px;color:#0c0c14;transform:scaleX(0.930);">Fori Multipli</span><svg class="b" style="left:1507px;top:609px;" width="32" height="32" viewBox="0 0 32 32"><path d="M4 5L16 3 22 7V14L16 16 18 28H9L10 16 4 13Z" fill="#e0452a" stroke="#8a1f0e" stroke-width="0.800"/><path d="M6 6L14 5V12L6 11Z" fill="#333"/><path d="M22 8L30 10.500 22 13Z" fill="#bfc4ca" stroke="#666" stroke-width="0.600"/><rect x="8" y="27" width="12" height="4" rx="1" fill="#333"/><rect x="10" y="17" width="7" height="9" fill="#f2a08a"/></svg><span class="t" style="left:1503.9px;top:642.9px;font-size:12.5px;color:#0c0c14;transform:scaleX(0.930);">Applica</span><span class="t" style="left:1501.0px;top:657.9px;font-size:12.5px;color:#0c0c14;transform:scaleX(0.930);">Forature</span><svg class="b" style="left:1356.8px;top:684px;" width="32" height="32" viewBox="0 0 32 32"><path d="M4 5L16 3 22 7V14L16 16 18 28H9L10 16 4 13Z" fill="#d2d5d9" stroke="#8a8f96" stroke-width="0.800"/><path d="M6 6L14 5V12L6 11Z" fill="#9aa"/><path d="M22 8L30 10.500 22 13Z" fill="#d8dbe0" stroke="#999" stroke-width="0.600"/><path d="M17 17L28 28M28 17L17 28" stroke="#e8322a" stroke-width="3.200"/></svg><span class="t" style="left:1351.8px;top:717.9px;font-size:12.5px;color:#0c0c14;transform:scaleX(0.930);">Rimuovi</span><span class="t" style="left:1350.8px;top:732.9px;font-size:12.5px;color:#0c0c14;transform:scaleX(0.930);">Forature</span><svg class="b" style="left:1432px;top:684px;" width="32" height="32" viewBox="0 0 32 32"><g transform="translate(0 12)"><path d="M0.500 8.500L16.500 0.500 31 6.700 12.500 14Z" fill="#cf8258" stroke="#7d4526" stroke-width="0.800"/><path d="M0.500 8.500L12.500 14V20L0.500 14.500Z" fill="#b4663f" stroke="#7d4526" stroke-width="0.800"/><path d="M12.500 14L31 6.700V12.500L12.500 20Z" fill="#a65a36" stroke="#7d4526" stroke-width="0.800"/></g><path d="M18 0H27V10L24 14H21L18 10Z" fill="#3a3f46" stroke="#111" stroke-width="0.600"/><path d="M20 14H25L23 26H21Z" fill="#e8eaee" stroke="#777" stroke-width="0.600"/></svg><span class="t" style="left:1435.4px;top:717.9px;font-size:12.5px;color:#0c0c14;transform:scaleX(0.930);">Crea</span><span class="t" style="left:1416.3px;top:732.9px;font-size:12.5px;color:#0c0c14;transform:scaleX(0.930);">Sagomatura</span><svg class="b" style="left:1507px;top:684px;" width="32" height="32" viewBox="0 0 32 32"><g transform="translate(0 12)"><path d="M0.500 8.500L16.500 0.500 31 6.700 12.500 14Z" fill="#cf8258" stroke="#7d4526" stroke-width="0.800"/><path d="M0.500 8.500L12.500 14V20L0.500 14.500Z" fill="#b4663f" stroke="#7d4526" stroke-width="0.800"/><path d="M12.500 14L31 6.700V12.500L12.500 20Z" fill="#a65a36" stroke="#7d4526" stroke-width="0.800"/></g><path d="M27.94 10.04 L27.94 11.96 L25.60 12.33 L24.90 14.02 L26.29 15.94 L24.94 17.29 L23.02 15.90 L21.33 16.60 L20.96 18.94 L19.04 18.94 L18.67 16.60 L16.98 15.90 L15.06 17.29 L13.71 15.94 L15.10 14.02 L14.40 12.33 L12.06 11.96 L12.06 10.04 L14.40 9.67 L15.10 7.98 L13.71 6.06 L15.06 4.71 L16.98 6.10 L18.67 5.40 L19.04 3.06 L20.96 3.06 L21.33 5.40 L23.02 6.10 L24.94 4.71 L26.29 6.06 L24.90 7.98 L25.60 9.67 Z" fill="#c2c6cc" stroke="#6a7078" stroke-width="0.600"/><circle cx="20" cy="11" r="2.56" fill="#fff" stroke="#6a7078" stroke-width="0.600"/><path d="M9 19L17 16 20 17.500 12 21Z" fill="#7d4526"/></svg><span class="t" style="left:1492.6px;top:717.9px;font-size:12.5px;color:#0c0c14;transform:scaleX(0.930);">Crea Scavo</span><svg class="b" style="left:1356.8px;top:759px;" width="32" height="32" viewBox="0 0 32 32"><g transform="translate(0 12)"><path d="M0.500 8.500L16.500 0.500 31 6.700 12.500 14Z" fill="#cf8258" stroke="#7d4526" stroke-width="0.800"/><path d="M0.500 8.500L12.500 14V20L0.500 14.500Z" fill="#b4663f" stroke="#7d4526" stroke-width="0.800"/><path d="M12.500 14L31 6.700V12.500L12.500 20Z" fill="#a65a36" stroke="#7d4526" stroke-width="0.800"/></g><path d="M4 22L16 17M7 23.500L19 18.500M10 25L22 20" stroke="#7d4526" stroke-width="1.200"/><path d="M20.95 8.16 L20.95 9.84 L18.90 10.16 L18.29 11.65 L19.51 13.32 L18.32 14.51 L16.65 13.29 L15.16 13.90 L14.84 15.95 L13.16 15.95 L12.84 13.90 L11.35 13.29 L9.68 14.51 L8.49 13.32 L9.71 11.65 L9.10 10.16 L7.05 9.84 L7.05 8.16 L9.10 7.84 L9.71 6.35 L8.49 4.68 L9.68 3.49 L11.35 4.71 L12.84 4.10 L13.16 2.05 L14.84 2.05 L15.16 4.10 L16.65 4.71 L18.32 3.49 L19.51 4.68 L18.29 6.35 L18.90 7.84 Z" fill="#c2c6cc" stroke="#6a7078" stroke-width="0.600"/><circle cx="14" cy="9" r="2.24" fill="#fff" stroke="#6a7078" stroke-width="0.600"/></svg><span class="t" style="left:1356.6px;top:792.9px;font-size:12.5px;color:#0c0c14;transform:scaleX(0.930);">Scavo</span><span class="t" style="left:1352.8px;top:807.9px;font-size:12.5px;color:#0c0c14;transform:scaleX(0.930);">Multiplo</span><svg class="b" style="left:1432px;top:759px;" width="32" height="32" viewBox="0 0 32 32"><path d="M3 3H29V30H3Z" fill="#2fb3b0" stroke="#145a5a" stroke-width="1"/><rect x="6" y="6" width="20" height="9" fill="#0f5f66" stroke="#145a5a" stroke-width="0.600"/><rect x="6" y="18" width="20" height="9" fill="#0f5f66" stroke="#145a5a" stroke-width="0.600"/><path d="M3 3L6 6M29 3L26 6" stroke="#145a5a" stroke-width="0.600"/><g transform="translate(14 27) rotate(-45)"><rect x="4" y="-2" width="11.3848" height="4" fill="#f5a623" stroke="#a8690c" stroke-width="0.600"/><path d="M4 -2L0 0 4 2Z" fill="#f0d9b0" stroke="#8a6a3a" stroke-width="0.500"/><rect x="15.3848" y="-2" width="3" height="4" fill="#e28ac0" stroke="#8a4a70" stroke-width="0.500"/></g><path d="M26 10L27 13 30 14 27 15 26 18 25 15 22 14 25 13Z" fill="#f5c542"/></svg><span class="t" style="left:1413.8px;top:792.9px;font-size:12.5px;color:#0c0c14;transform:scaleX(0.930);">Crea Cabinet</span><svg class="b" style="left:1507px;top:759px;" width="32" height="32" viewBox="0 0 32 32"><rect x="2" y="1" width="28" height="30" fill="#e7ecef"/><g fill="#3bb7b4" stroke="#145a5a" stroke-width="0.700"><path d="M5 8L9 5V25L5 28Z"/><path d="M9 5H12V25H9Z" fill="#7fd6d3"/><path d="M13 8L17 5V25L13 28Z"/><path d="M17 5H20V25H17Z" fill="#7fd6d3"/><path d="M21 8L25 5V25L21 28Z"/><path d="M25 5H28V25H25Z" fill="#7fd6d3"/></g></svg><span class="t" style="left:1510.4px;top:792.9px;font-size:12.5px;color:#0c0c14;transform:scaleX(0.930);">Crea</span><span class="t" style="left:1501.4px;top:807.9px;font-size:12.5px;color:#0c0c14;transform:scaleX(0.930);">Divisioni</span><svg class="b" style="left:1339px;top:837px;" width="14" height="12" viewBox="0 0 14 12"><path d="M6 0.500L0.500 6 6 11.500V8H13.500V4H6Z" fill="#b9b9b9"/></svg><span class="t" style="left:1354.0px;top:835.2px;font-size:12.5px;color:#8a8a8a;transform:scaleX(0.864);">Indietro</span><div class="b" style="left:1393px;top:835px;width:120px;height:16px;background:#fafafa;border:1px solid #dcdcdc;border-radius:3px;"></div><span class="t" style="left:1420.5px;top:835.2px;font-size:12.5px;color:#111;transform:scaleX(0.835);">Altri Cataloghi</span><div class="b" style="left:1515px;top:835px;width:65px;height:16px;background:#f4f4f4;border:1px solid #e0e0e0;border-radius:3px;"></div><div class="b" style="left:1333px;top:853px;width:74px;height:23px;background:#fbfbfb;border:1px solid #d0d0d0;"></div><span class="t" style="left:1338.3px;top:855.7px;font-size:12.5px;color:#333;transform:scaleX(0.923);">Oikema Eng</span><span class="t" style="left:1415.4px;top:855.7px;font-size:12.5px;color:#444;transform:scaleX(0.906);">Starter</span><span class="t" style="left:1462.0px;top:855.7px;font-size:12.5px;color:#444;transform:scaleX(0.885);">Shapes</span><span class="t" style="left:1512.6px;top:855.7px;font-size:12.5px;color:#444;transform:scaleX(0.938);">Advshaps</span><svg class="b" style="left:1583px;top:860px;" width="9" height="8" viewBox="0 0 9 8"><path d="M0 0.600H9" stroke="#555" stroke-width="1.200"/><path d="M0 3H9L4.500 7.500Z" fill="#555"/></svg>
<!-- g_status -->
<div class="b" style="left:1px;top:877px;width:1597px;height:22px;background:#fbfbfb;"></div><div class="b" style="left:3px;top:876.5px;width:1594px;height:1px;background:#dcdcdc;"></div><div class="b" style="left:0px;top:899px;width:1600px;height:1px;background:#2c60bb;"></div><div class="b" style="left:1598px;top:0px;width:2px;height:900px;background:#2b5aa8;"></div><div class="b" style="left:1597px;top:65px;width:1px;height:834px;background:#ececf0;"></div><span class="t" style="left:5.7px;top:879.7px;font-size:12.5px;color:#1f2a44;transform:scaleX(0.884);">Fine</span><span class="t" style="left:567.5px;top:880.2px;font-size:12.5px;color:#333;transform:scaleX(0.920);">Dimensioni vista 1099 x  692</span><svg class="b" style="left:729px;top:882px;" width="9" height="14" viewBox="0 0 9 14"><rect x="1" y="0.500" width="7" height="13" fill="#f0c23a" stroke="#8a6a10" stroke-width="0.800"/><path d="M1 3H4M1 6H5M1 9H4M1 12H5" stroke="#6a4a08" stroke-width="0.700"/></svg><span class="t" style="left:745.5px;top:880.2px;font-size:12.5px;color:#333;transform:scaleX(0.942);">Unità</span><span class="t" style="left:786.0px;top:880.2px;font-size:12.5px;color:#333;">mm; gradi</span><svg class="b" style="left:854px;top:881.5px;" width="15" height="15" viewBox="0 0 15 15"><circle cx="6" cy="6" r="4.500" fill="#e9eef4" stroke="#666" stroke-width="1.100"/><path d="M9.500 9.500L14.500 14.500" stroke="#666" stroke-width="2"/><path d="M3.500 6H8.500M6 3.500V8.500" stroke="#889" stroke-width="0.700"/></svg><svg class="b" style="left:876px;top:881.5px;" width="15" height="15" viewBox="0 0 15 15"><circle cx="6" cy="6" r="4.500" fill="#e9eef4" stroke="#666" stroke-width="1.100"/><path d="M9.500 9.500L14.500 14.500" stroke="#666" stroke-width="2"/><path d="M3.500 6H8.500M6 3.500V8.500" stroke="#889" stroke-width="0.700"/></svg><svg class="b" style="left:898.5px;top:889px;" width="6" height="4" viewBox="0 0 6 4"><path d="M0.500 0.500L3 3 5.500 0.500" stroke="#444" stroke-width="1.100" fill="none"/></svg><svg class="b" style="left:911px;top:882px;" width="17" height="15" viewBox="0 0 17 15"><path d="M1 2H7V13H1Z" fill="#6a9ad6" stroke="#2a4f8a" stroke-width="0.800"/><path d="M7 2H13V13H7Z" fill="#a9c8ee" stroke="#2a4f8a" stroke-width="0.800"/><path d="M10 5H16V15H10Z" fill="#dce9f8" stroke="#2a4f8a" stroke-width="0.800"/></svg><svg class="b" style="left:933.5px;top:889px;" width="6" height="4" viewBox="0 0 6 4"><path d="M0.500 0.500L3 3 5.500 0.500" stroke="#444" stroke-width="1.100" fill="none"/></svg><svg class="b" style="left:946px;top:881px;" width="17" height="16" viewBox="0 0 17 16"><path d="M8 1V12" stroke="#2a5fb0" stroke-width="1.600"/><path d="M5.500 4L8 0 10.500 4Z" fill="#2a5fb0"/><path d="M1 13L8 10.500 16 13 8 15.500Z" fill="#c9d8ee" stroke="#2a4f8a" stroke-width="0.800"/></svg><svg class="b" style="left:970px;top:881.5px;" width="17" height="16" viewBox="0 0 17 16"><path d="M1 4.500L5 1H15V11L11 14.500H1Z" fill="#fbe88a" stroke="#6a5a1a" stroke-width="0.800"/><path d="M1 4.500H11V14.500H1Z" fill="#f6d32d" stroke="#6a5a1a" stroke-width="0.800"/><path d="M11 4.500L15 1V11L11 14.500Z" fill="#d9a820" stroke="#6a5a1a" stroke-width="0.800"/><circle cx="14" cy="7" r="2" fill="#e8322a"/></svg><svg class="b" style="left:993px;top:889px;" width="6" height="4" viewBox="0 0 6 4"><path d="M0.500 0.500L3 3 5.500 0.500" stroke="#444" stroke-width="1.100" fill="none"/></svg><svg class="b" style="left:1005px;top:881.5px;" width="16" height="16" viewBox="0 0 16 16"><path d="M1 4.500L5 1H15V11L11 14.500H1Z" fill="#8ab4ec" stroke="#1d3e7a" stroke-width="0.800"/><path d="M1 4.500H11V14.500H1Z" fill="#4a86d8" stroke="#1d3e7a" stroke-width="0.800"/><path d="M11 4.500L15 1V11L11 14.500Z" fill="#2f64b0" stroke="#1d3e7a" stroke-width="0.800"/></svg><svg class="b" style="left:1028px;top:889px;" width="6" height="4" viewBox="0 0 6 4"><path d="M0.500 0.500L3 3 5.500 0.500" stroke="#444" stroke-width="1.100" fill="none"/></svg><svg class="b" style="left:1041px;top:882px;" width="17" height="15" viewBox="0 0 17 15"><path d="M1 6L6 3 9 6 4 9Z" fill="#4a86d8" stroke="#1d3e7a" stroke-width="0.700"/><rect x="8" y="6" width="7" height="8" fill="#555"/><rect x="9.500" y="8" width="4" height="3" fill="#d4d8de"/><path d="M11 1V5" stroke="#c22" stroke-width="1"/></svg><svg class="b" style="left:1063px;top:889px;" width="6" height="4" viewBox="0 0 6 4"><path d="M0.500 0.500L3 3 5.500 0.500" stroke="#444" stroke-width="1.100" fill="none"/></svg><div class="b" style="left:1072px;top:879px;width:24px;height:20px;background:#c9c9c9;border:1px solid #3563b5;"></div><svg class="b" style="left:1076px;top:882px;" width="16" height="15" viewBox="0 0 16 15"><path d="M1 4.500L5 1H15V11L11 14.500H1Z" fill="#cfd6de" stroke="#4a5666" stroke-width="0.800"/><path d="M1 4.500H11V14.500H1Z" fill="#aab4c0" stroke="#4a5666" stroke-width="0.800"/><path d="M11 4.500L15 1V11L11 14.500Z" fill="#8a96a6" stroke="#4a5666" stroke-width="0.800"/></svg><svg class="b" style="left:1099px;top:883px;" width="17" height="13" viewBox="0 0 17 13"><circle cx="4.500" cy="8" r="3.500" fill="none" stroke="#777" stroke-width="1"/><circle cx="12.500" cy="8" r="3.500" fill="none" stroke="#777" stroke-width="1"/><path d="M8 8H9M1 6L3 1M16 6L14 1" stroke="#777" stroke-width="1" fill="none"/></svg><svg class="b" style="left:1118px;top:889px;" width="6" height="4" viewBox="0 0 6 4"><path d="M0.500 0.500L3 3 5.500 0.500" stroke="#444" stroke-width="1.100" fill="none"/></svg><div class="b" style="left:1128px;top:879px;width:31px;height:20px;background:#c9c9c9;border:1px solid #3563b5;"></div><svg class="b" style="left:1131px;top:881.5px;" width="17" height="16" viewBox="0 0 17 16"><path d="M1 4.500L5 1H15V11L11 14.500H1Z" fill="#6aa0e8" stroke="#14305f" stroke-width="0.800"/><path d="M1 4.500H11V14.500H1Z" fill="#3b7ad6" stroke="#14305f" stroke-width="0.800"/><path d="M11 4.500L15 1V11L11 14.500Z" fill="#2a5fb0" stroke="#14305f" stroke-width="0.800"/></svg><svg class="b" style="left:1151px;top:889px;" width="6" height="4" viewBox="0 0 6 4"><path d="M0.500 0.500L3 3 5.500 0.500" stroke="#444" stroke-width="1.100" fill="none"/></svg><svg class="b" style="left:1164px;top:882px;" width="16" height="14" viewBox="0 0 16 14"><path d="M7 1L1 6 7 11V8C11 8 13 9 14 13 15.500 7 12 4 7 4Z" fill="#c6c6c6" stroke="#aaa" stroke-width="0.600"/></svg><div class="b" style="left:1184px;top:879px;width:24px;height:20px;background:#c9c9c9;border:1px solid #3563b5;"></div><svg class="b" style="left:1191px;top:882px;" width="11" height="15" viewBox="0 0 11 15"><path d="M1 1V12L4 9.500 6 14 8 13 6 8.500H10Z" fill="#fff" stroke="#222" stroke-width="1"/></svg><svg class="b" style="left:1212px;top:882px;" width="15" height="15" viewBox="0 0 15 15"><rect x="0.500" y="0.500" width="8" height="6" fill="none" stroke="#aaa" stroke-width="0.800" stroke-dasharray="1.500 1"/><path d="M7 5V14L9.500 12 11 15 12.500 14.300 11 11.500H14Z" fill="#fff" stroke="#222" stroke-width="0.900"/></svg><div class="b" style="left:1232px;top:879.5px;width:140px;height:19px;background:#fff;border:1px solid #dcdcdc;"></div><span class="t" style="left:1234.5px;top:881.2px;font-size:12.5px;color:#111;transform:scaleX(0.914);">Qualsiasi</span><svg class="b" style="left:1362px;top:888px;" width="7" height="4" viewBox="0 0 7 4"><path d="M0 0H7L3.500 4Z" fill="#555"/></svg><div class="b" style="left:1374px;top:879.5px;width:179px;height:19px;background:#fff;border:1px solid #dcdcdc;"></div><span class="t" style="left:1376.0px;top:881.2px;font-size:12.5px;color:#111;transform:scaleX(0.960);">Default</span><svg class="b" style="left:1543.5px;top:888px;" width="7" height="4" viewBox="0 0 7 4"><path d="M0 0H7L3.500 4Z" fill="#555"/></svg><svg class="b" style="left:1559px;top:882px;" width="14" height="14" viewBox="0 0 14 14"><rect x="4" y="0.500" width="6" height="5" fill="#d23a3a" stroke="#7a1a1a" stroke-width="0.600"/><rect x="0.500" y="8.500" width="5" height="5" fill="#3b7ad6" stroke="#14305f" stroke-width="0.600"/><rect x="8.500" y="8.500" width="5" height="5" fill="#3b7ad6" stroke="#14305f" stroke-width="0.600"/><path d="M7 5.500V7H3V8.500M7 7H11V8.500" stroke="#555" stroke-width="0.800" fill="none"/></svg><svg class="b" style="left:1584px;top:886px;" width="9" height="9" viewBox="0 0 9 9"><g fill="#aaa"><rect x="6" y="0" width="2" height="2"/><rect x="3" y="3" width="2" height="2"/><rect x="6" y="3" width="2" height="2"/><rect x="0" y="6" width="2" height="2"/><rect x="3" y="6" width="2" height="2"/><rect x="6" y="6" width="2" height="2"/></g></svg>
<!-- g_view -->
<svg class="b" style="left:0;top:0" width="1600" height="900" viewBox="0 0 1600 900"><defs><linearGradient id="bg" x1="0" y1="0" x2="0" y2="1"><stop offset="0" stop-color="#f1f1f1"/><stop offset="1" stop-color="#3d2625"/></linearGradient><filter id="bl" x="-50%" y="-50%" width="200%" height="200%"><feGaussianBlur stdDeviation="9"/></filter><filter id="bl3" x="-50%" y="-50%" width="200%" height="200%"><feGaussianBlur stdDeviation="3"/></filter><filter id="bl4" x="-20%" y="-200%" width="140%" height="500%"><feGaussianBlur stdDeviation="1.600"/></filter><filter id="bl2" x="-50%" y="-50%" width="200%" height="200%"><feGaussianBlur stdDeviation="16"/></filter><clipPath id="vp"><rect x="228.500" y="186.500" width="1097.500" height="690"/></clipPath></defs><g clip-path="url(#vp)"><rect x="228.500" y="186.500" width="1097.500" height="690" fill="url(#bg)"/><ellipse cx="350" cy="638" rx="38" ry="9" fill="#3a2a2c" opacity="0.500" filter="url(#bl)"/><ellipse cx="1255" cy="712" rx="42" ry="11" fill="#2e1c1c" opacity="0.420" filter="url(#bl)"/><ellipse cx="700" cy="628" rx="170" ry="12" fill="#b8aeae" opacity="0.330" filter="url(#bl)"/><path d="M582 604Q700 588 820 592L820 600Q700 596 582 612Z" fill="#3a2c2c" opacity="0.350" filter="url(#bl3)"/><path d="M388 656L518 660L512 720L396 716Z" fill="#b8aeae" opacity="0.300" filter="url(#bl)"/><path d="M520 654L580 634L580 680L524 700Z" fill="#b8aeae" opacity="0.200" filter="url(#bl)"/><path d="M826 732L924 764L920 820L832 790Z" fill="#a89c9c" opacity="0.220" filter="url(#bl)"/><ellipse cx="905" cy="705" rx="115" ry="38" fill="#2c1b1b" opacity="0.400" filter="url(#bl2)"/><path d="M952 596L984 596L984 716L1016 776L925 762Z" fill="#2a1a1a" opacity="0.420" filter="url(#bl3)"/><path d="M1016 778Q1130 770 1215 708L1200 760Q1120 810 1020 815Z" fill="#8a6050" opacity="0.350" filter="url(#bl)"/><path d="M575.5 468.5C586.2 467.1 619.2 462.1 640.0 459.8C660.8 457.5 683.3 455.9 700.0 454.5C716.7 453.1 723.3 452.4 740.0 451.5C756.7 450.6 781.7 449.1 800.0 449.0C818.3 448.9 835.0 449.9 850.0 451.0C865.0 452.1 873.8 453.0 890.0 455.7C906.2 458.4 934.5 464.1 947.0 467.0C959.5 469.9 959.2 470.5 965.0 473.0C970.8 475.5 977.3 479.2 982.0 482.0C986.7 484.8 991.2 488.7 993.0 490.0C994.8 491.3 993.0 490.0 993.0 490.0L985.0 606.0C970.8 604.3 927.6 598.5 900.0 596.0C872.4 593.5 845.9 592.0 819.2 591.0C792.5 590.0 768.2 589.5 740.0 590.2C711.8 591.0 676.4 593.2 650.0 595.5C623.6 597.8 593.1 602.3 581.7 603.7Z" fill="#f7f7f0" stroke="#2a2b32" stroke-width="1.344" stroke-linejoin="round" /><path d="M575.5 475.5C586.2 474.1 619.2 469.1 640.0 466.8C660.8 464.5 683.3 462.9 700.0 461.5C716.7 460.1 723.3 459.4 740.0 458.5C756.7 457.6 781.7 456.1 800.0 456.0C818.3 455.9 835.0 456.9 850.0 458.0C865.0 459.1 873.8 460.0 890.0 462.7C906.2 465.4 934.5 471.1 947.0 474.0C959.5 476.9 959.2 477.5 965.0 480.0C970.8 482.5 979.2 487.5 982.0 489.0" fill="none" stroke="#a9a9a0" stroke-width="6" opacity="0.550" filter="url(#bl4)"/><path d="M581.7 572.2C593.1 570.8 623.6 566.4 650.0 564.0C676.4 561.6 716.7 559.1 740.0 558.0C763.3 556.9 776.8 557.3 790.0 557.3C803.2 557.3 814.3 557.9 819.2 558.0L819.2 564.0C814.3 563.9 803.2 563.3 790.0 563.3C776.8 563.3 763.3 562.9 740.0 564.0C716.7 565.1 676.4 567.6 650.0 570.0C623.6 572.4 593.1 576.8 581.7 578.2Z" fill="#808080" stroke="#444" stroke-width="1.12" stroke-linejoin="round" /><path d="M581.7 572.2C593.1 570.8 623.6 566.4 650.0 564.0C676.4 561.6 716.7 559.1 740.0 558.0C763.3 556.9 776.8 557.3 790.0 557.3C803.2 557.3 814.3 557.9 819.2 558.0" fill="none" stroke="#3a3a3a" stroke-width="1.344" stroke-linejoin="round" /><path d="M585.0 464.0 L586.2 571.0" stroke="#2a2b32" stroke-width="2.3" fill="none"/><path d="M643.5 457.0 L646.2 563.5" stroke="#2a2b32" stroke-width="2.3" fill="none"/><path d="M705.0 452.0 L707.7 559.5" stroke="#2a2b32" stroke-width="2.3" fill="none"/><path d="M839.0 446.0 L839.0 537.0" stroke="#2a2b32" stroke-width="2.3" fill="none"/><path d="M898.2 450.0 L898.7 529.0" stroke="#2a2b32" stroke-width="2.3" fill="none"/><path d="M954.5 460.0 L955.0 516.0" stroke="#2a2b32" stroke-width="2.3" fill="none"/><path d="M983.5 475.0 L983.5 500.0" stroke="#2a2b32" stroke-width="2.3" fill="none"/><path d="M989.5 480.0 L989.5 497.0" stroke="#2a2b32" stroke-width="2.3" fill="none"/><path d="M767.7 452.0L777.5 452.0L778.7 598.5L769.0 598.5Z" fill="#e4e4de" stroke="#2a2b32" stroke-width="1.792" stroke-linejoin="round" /><path d="M772.5 452.0 L773.5 598.0" stroke="#2a2b32" stroke-width="1.3" fill="none"/><path d="M511.5 483.5L549.0 483.0L576.0 466.0L582.0 630.0L519.5 651.5Z" fill="#f7f7f0" stroke="#2a2b32" stroke-width="1.344" stroke-linejoin="round" /><path d="M516.0 486.5 L523.5 566.0" stroke="#2a2b32" stroke-width="1.2" fill="none"/><path d="M522.7 548.0L523.5 566.0L570.0 548.0Z" fill="#e9e9e4" stroke="#2a2b32" stroke-width="1.344" stroke-linejoin="round" /><path d="M524.0 552.0 L556.0 553.5" stroke="#2a2b32" stroke-width="1" fill="none"/><path d="M524.0 558.0 L545.0 557.5" stroke="#2a2b32" stroke-width="1" fill="none"/><path d="M567.7 468.5 L566.2 548.0" stroke="#2a2b32" stroke-width="1" fill="none"/><path d="M571.5 468.5 L570.0 548.0" stroke="#2a2b32" stroke-width="1.3" fill="none"/><path d="M522.7 548.0 L566.2 548.0" stroke="#b9b9b4" stroke-width="1" fill="none"/><path d="M575.7 468.0L580.2 468.0L581.7 630.0L578.0 630.0Z" fill="#f7f7f0" stroke="#2a2b32" stroke-width="1.344" stroke-linejoin="round" /><path d="M383.2 431.5C386.0 430.4 393.9 427.3 400.0 425.0C406.1 422.7 411.7 420.2 420.0 417.5C428.3 414.8 439.0 412.0 450.0 409.0C461.0 406.0 474.3 401.8 486.0 399.5C497.7 397.2 508.2 396.2 520.0 395.0C531.8 393.8 547.0 392.8 557.0 392.0C567.0 391.2 566.2 391.2 580.0 390.0C593.8 388.8 621.5 386.4 640.0 385.0C658.5 383.6 682.5 382.1 691.0 381.5L692.5 428.0C681.2 428.6 647.2 429.7 625.0 431.7C602.8 433.7 576.8 437.4 559.3 440.0C541.8 442.6 532.7 444.6 520.0 447.0C507.3 449.4 493.1 452.1 483.0 454.5C472.9 456.9 476.4 457.8 459.7 461.7C443.0 465.6 395.8 475.3 383.0 478.0Z" fill="#f7f7f0" stroke="none" stroke-width="0" stroke-linejoin="round" /><path d="M864.5 381.5C873.8 381.8 904.1 382.5 920.0 383.5C935.9 384.5 943.3 385.5 960.0 387.5C976.7 389.5 1004.0 393.2 1020.0 395.7C1036.0 398.2 1044.5 399.9 1056.0 402.5C1067.5 405.1 1079.4 408.1 1089.0 411.0C1098.6 413.9 1107.2 417.2 1113.7 420.0C1120.2 422.8 1123.6 425.7 1128.0 428.0C1132.4 430.3 1138.0 433.0 1140.0 434.0L1116.7 461.0C1114.1 462.2 1107.1 468.5 1101.0 468.5C1094.9 468.5 1087.5 463.5 1080.0 461.0C1072.5 458.5 1068.5 456.4 1056.0 453.5C1043.5 450.6 1021.0 446.1 1005.0 443.5C989.0 440.9 974.2 439.8 960.0 438.0C945.8 436.2 936.2 434.2 920.0 432.5C903.8 430.8 872.5 428.8 863.0 428.0Z" fill="#f7f7f0" stroke="none" stroke-width="0" stroke-linejoin="round" /><path d="M450.0 408.0L488.0 399.0L560.0 440.0L578.0 467.0L549.0 484.0L480.0 470.0L459.0 462.0Z" fill="#f7f7f0" stroke="none" stroke-width="0" stroke-linejoin="round" /><path d="M382.8 429.0C385.7 427.8 393.8 424.4 400.0 422.0C406.2 419.6 411.7 417.0 420.0 414.5C428.3 412.0 445.0 408.2 450.0 407.0L450.0 410.0L459.7 461.7L402.0 477.5L383.5 478.0Z" fill="#f4a45f" stroke="#2a2b32" stroke-width="1.568" stroke-linejoin="round" /><path d="M474.7 404.0 L474.7 450.5" stroke="#2a2b32" stroke-width="1.2" fill="none"/><path d="M479.5 403.5 L479.5 451.0" stroke="#2a2b32" stroke-width="1.2" fill="none"/><path d="M474.7 450.5 L482.0 453.0" stroke="#2a2b32" stroke-width="1.2" fill="none"/><path d="M480.0 400.0C484.2 399.2 495.7 396.9 505.0 395.5C514.3 394.1 530.8 392.2 536.0 391.5L543.0 439.5L543.5 443.5C539.6 444.3 528.2 446.8 520.0 448.5C511.8 450.2 498.3 453.1 494.0 454.0L481.0 450.0Z" fill="#f4a45f" stroke="#2a2b32" stroke-width="1.568" stroke-linejoin="round" /><path d="M553.7 393.5 L555.5 441.0" stroke="#2a2b32" stroke-width="1.2" fill="none"/><path d="M557.5 392.7 L559.3 440.0" stroke="#2a2b32" stroke-width="1.2" fill="none"/><path d="M557.5 389.7C564.6 388.9 586.2 386.3 600.0 385.0C613.8 383.7 625.0 383.0 640.0 382.0C655.0 381.0 681.8 379.7 690.2 379.2L692.5 431.0C681.2 431.6 647.2 432.7 625.0 434.7C602.8 436.7 570.2 441.6 559.3 443.0Z" fill="#f4a45f" stroke="#2a2b32" stroke-width="1.568" stroke-linejoin="round" /><path d="M692.0 381.5L699.0 380.5L699.5 427.5L693.5 428.0Z" fill="#f7f7f0" stroke="#2a2b32" stroke-width="1.344" stroke-linejoin="round" /><path d="M695.5 381.0 L696.5 428.0" stroke="#2a2b32" stroke-width="1" fill="none"/><path d="M699.2 400.2L740.0 398.7L800.0 398.9L851.0 399.5L851.7 407.7L800.0 407.3L740.0 407.7L699.2 408.5Z" fill="#55536d" stroke="#2a2b32" stroke-width="1.456" stroke-linejoin="round" /><path d="M699.2 408.5L851.7 407.7L851.7 427.5L800.0 425.5L740.0 426.5L699.5 427.5Z" fill="#f7f7f0" stroke="#2a2b32" stroke-width="1.12" stroke-linejoin="round" /><path d="M700.0 411.5L771.5 411.3L771.5 429.0L740.0 429.5L700.0 430.2Z" fill="#f4a45f" stroke="#2a2b32" stroke-width="1.344" stroke-linejoin="round" /><path d="M781.2 411.5L851.7 412.2L851.7 430.2L800.0 428.5L781.2 428.7Z" fill="#f4a45f" stroke="#2a2b32" stroke-width="1.344" stroke-linejoin="round" /><path d="M775.0 408.0 L775.0 426.0" stroke="#2a2b32" stroke-width="1" fill="none"/><path d="M777.5 408.0 L777.5 426.0" stroke="#2a2b32" stroke-width="1" fill="none"/><path d="M851.7 380.0L864.5 381.5L863.0 428.0L852.5 427.5Z" fill="#f7f7f0" stroke="#2a2b32" stroke-width="1.344" stroke-linejoin="round" /><path d="M856.0 380.5 L857.0 428.0" stroke="#2a2b32" stroke-width="1" fill="none"/><path d="M858.5 381.0L864.5 381.5L863.0 428.0Z" fill="#dcdcd8" stroke="none" stroke-width="0" stroke-linejoin="round" /><path d="M865.2 379.2C874.3 379.5 904.2 380.0 920.0 381.0C935.8 382.0 949.0 383.8 960.0 385.0C971.0 386.2 981.8 387.9 986.2 388.5L986.2 443.5C981.8 443.1 971.0 442.3 960.0 441.0C949.0 439.7 936.2 437.2 920.0 435.5C903.8 433.8 872.5 431.8 863.0 431.0Z" fill="#f4a45f" stroke="#2a2b32" stroke-width="1.568" stroke-linejoin="round" /><path d="M988.5 392.0 L988.5 441.0" stroke="#2a2b32" stroke-width="1" fill="none"/><path d="M990.7 392.0 L991.5 441.5" stroke="#2a2b32" stroke-width="1.2" fill="none"/><path d="M1002.0 395.0L1011.7 394.2L1005.0 443.0L999.0 442.0Z" fill="#d5d5d0" stroke="none" stroke-width="0" stroke-linejoin="round" /><path d="M1011.7 391.2L1056.0 398.7L1056.0 453.5L1056.0 456.5C1051.7 455.6 1038.5 452.8 1030.0 451.0C1021.5 449.2 1009.2 446.8 1005.0 446.0L1005.0 443.0Z" fill="#f4a45f" stroke="#2a2b32" stroke-width="1.568" stroke-linejoin="round" /><path d="M1059.0 402.5 L1059.0 454.0" stroke="#2a2b32" stroke-width="1" fill="none"/><path d="M1062.7 404.0 L1063.5 455.0" stroke="#2a2b32" stroke-width="1.2" fill="none"/><path d="M1080.0 409.0L1089.7 410.7L1080.7 460.2L1073.0 458.0Z" fill="#d5d5d0" stroke="none" stroke-width="0" stroke-linejoin="round" /><path d="M1090.2 407.7L1113.7 416.7L1113.7 464.7L1080.7 463.2Z" fill="#f4a45f" stroke="#2a2b32" stroke-width="1.568" stroke-linejoin="round" /><path d="M1114.0 416.0L1128.0 424.0L1142.0 434.0L1140.0 444.0L1127.0 456.0L1110.0 466.0L1114.0 464.0Z" fill="#f7f7f0" stroke="none" stroke-width="0" stroke-linejoin="round" /><path d="M1116.7 421.2 L1116.7 462.5" stroke="#2a2b32" stroke-width="1.3" fill="none"/><path d="M690.0 366.0L697.5 369.5L699.5 380.5L690.0 381.8Z" fill="#4e4c66" stroke="#2a2b32" stroke-width="1.12" stroke-linejoin="round" /><path d="M855.0 368.7L863.5 364.5L865.0 381.5L851.5 380.0Z" fill="#4e4c66" stroke="#2a2b32" stroke-width="1.12" stroke-linejoin="round" /><path d="M381.0 428.0C384.2 426.4 393.5 421.5 400.0 418.5C406.5 415.5 411.7 412.8 420.0 410.0C428.3 407.2 439.2 404.0 450.0 401.5C460.8 399.0 479.2 396.1 485.0 395.0L486.0 399.5C480.0 401.1 461.0 406.0 450.0 409.0C439.0 412.0 428.3 414.8 420.0 417.5C411.7 420.2 406.1 422.7 400.0 425.0C393.9 427.3 386.0 430.4 383.2 431.5Z" fill="#4e4c66" stroke="#2a2b32" stroke-width="1.456" stroke-linejoin="round" /><path d="M485.0 395.0C490.8 394.1 504.2 391.7 520.0 389.7C535.8 387.7 560.0 384.9 580.0 383.0C600.0 381.1 621.5 379.4 640.0 378.0C658.5 376.6 682.5 375.2 691.0 374.7L691.0 381.5C682.5 382.1 658.5 383.6 640.0 385.0C621.5 386.4 593.8 388.8 580.0 390.0C566.2 391.2 567.0 391.2 557.0 392.0C547.0 392.8 531.5 393.8 520.0 395.0C508.5 396.2 493.3 398.8 488.0 399.5Z" fill="#4e4c66" stroke="#2a2b32" stroke-width="1.456" stroke-linejoin="round" /><path d="M697.0 373.0C704.2 372.9 722.8 372.6 740.0 372.5C757.2 372.4 780.8 372.2 800.0 372.3C819.2 372.4 846.2 372.7 855.5 372.8L851.7 380.0C843.1 379.9 818.6 379.3 800.0 379.2C781.4 379.1 756.8 379.2 740.0 379.4C723.2 379.6 705.8 380.3 699.0 380.5Z" fill="#4e4c66" stroke="#2a2b32" stroke-width="1.456" stroke-linejoin="round" /><path d="M863.0 374.5C872.5 374.9 903.8 376.0 920.0 377.0C936.2 378.0 943.3 378.6 960.0 380.7C976.7 382.8 1000.0 386.2 1020.0 389.7C1040.0 393.2 1065.0 398.1 1080.0 401.7C1095.0 405.3 1101.2 407.9 1110.0 411.5C1118.8 415.1 1127.5 419.8 1132.5 423.5C1137.5 427.2 1138.8 432.2 1140.0 434.0L1128.0 428.0C1125.6 426.7 1120.2 422.8 1113.7 420.0C1107.2 417.2 1098.6 413.9 1089.0 411.0C1079.4 408.1 1067.5 405.1 1056.0 402.5C1044.5 399.9 1036.0 398.2 1020.0 395.7C1004.0 393.2 976.7 389.5 960.0 387.5C943.3 385.5 935.9 384.5 920.0 383.5C904.1 382.5 873.8 381.8 864.5 381.5Z" fill="#4e4c66" stroke="#2a2b32" stroke-width="1.456" stroke-linejoin="round" /><path d="M320.2 425.0C323.5 423.7 333.4 419.5 340.0 417.0C346.6 414.5 349.2 413.4 360.0 410.0C370.8 406.6 390.0 400.1 405.0 396.5C420.0 392.9 442.5 389.8 450.0 388.5L485.0 395.0C479.2 396.1 460.8 399.0 450.0 401.5C439.2 404.0 428.3 407.2 420.0 410.0C411.7 412.8 406.5 415.5 400.0 418.5C393.5 421.5 384.2 426.4 381.0 428.0Z" fill="#55536d" stroke="#2a2b32" stroke-width="1.568" stroke-linejoin="round" /><path d="M450.0 388.5C458.3 387.1 485.0 382.1 500.0 380.0C515.0 377.9 526.7 377.3 540.0 376.0C553.3 374.7 563.3 373.4 580.0 372.0C596.7 370.6 621.2 368.7 640.0 367.5C658.8 366.3 683.8 365.4 692.5 365.0L691.0 374.7C682.5 375.2 658.5 376.6 640.0 378.0C621.5 379.4 600.0 381.1 580.0 383.0C560.0 384.9 535.8 387.7 520.0 389.7C504.2 391.7 490.8 394.1 485.0 395.0Z" fill="#55536d" stroke="#2a2b32" stroke-width="1.568" stroke-linejoin="round" /><path d="M697.0 369.5C704.2 369.4 722.8 368.9 740.0 368.7C757.2 368.5 780.8 368.5 800.0 368.5C819.2 368.5 846.2 368.7 855.5 368.7L855.5 372.8C846.2 372.7 819.2 372.4 800.0 372.3C780.8 372.2 757.2 372.4 740.0 372.5C722.8 372.6 704.2 372.9 697.0 373.0Z" fill="#55536d" stroke="#2a2b32" stroke-width="1.568" stroke-linejoin="round" /><path d="M863.0 364.2C872.5 364.4 903.8 364.8 920.0 365.7C936.2 366.6 943.3 367.8 960.0 369.5C976.7 371.2 1000.0 373.6 1020.0 376.2C1040.0 378.8 1060.0 381.6 1080.0 385.2C1100.0 388.8 1123.8 393.6 1140.0 398.0C1156.2 402.4 1168.2 407.3 1177.5 411.5C1186.8 415.7 1191.6 419.8 1196.0 423.0C1200.4 426.2 1202.7 429.7 1204.0 431.0L1204.0 438.5L1169.0 439.6C1168.8 441.0 1168.8 445.1 1168.0 447.8C1167.2 450.5 1166.1 453.2 1164.0 456.0C1161.9 458.8 1161.2 462.7 1155.5 464.5C1149.8 466.3 1138.2 466.6 1130.0 467.0C1121.8 467.4 1110.0 467.0 1106.0 467.0C1105.8 465.7 1106.7 465.8 1110.0 464.0C1113.3 462.2 1120.2 458.5 1125.0 455.0C1129.8 451.5 1136.0 446.5 1138.5 443.0C1141.0 439.5 1139.8 435.5 1140.0 434.0C1138.8 432.2 1137.5 427.2 1132.5 423.5C1127.5 419.8 1118.8 415.1 1110.0 411.5C1101.2 407.9 1095.0 405.3 1080.0 401.7C1065.0 398.1 1040.0 393.2 1020.0 389.7C1000.0 386.2 976.7 382.8 960.0 380.7C943.3 378.6 936.2 378.0 920.0 377.0C903.8 376.0 872.5 374.9 863.0 374.5Z" fill="#55536d" stroke="#2a2b32" stroke-width="1.568" stroke-linejoin="round" /><path d="M1168.5 432.0 L1204.0 431.0" stroke="#2a2b32" stroke-width="1.3" fill="none"/><path d="M1168.5 432.0 L1169.0 439.6" stroke="#2a2b32" stroke-width="1.2" fill="none"/><path d="M451.0 391.5C459.2 390.2 485.2 385.5 500.0 383.5C514.8 381.5 526.7 380.8 540.0 379.5C553.3 378.2 563.3 376.9 580.0 375.5C596.7 374.1 621.3 372.2 640.0 371.0C658.7 369.8 683.3 368.9 692.0 368.5" fill="none" stroke="#2a2b32" stroke-width="1.008" stroke-linejoin="round" /><path d="M450.0 388.5 L485.0 395.0" stroke="#2a2b32" stroke-width="1.2" fill="none"/><path d="M1048.5 393.5 L1084.5 386.2" stroke="#2a2b32" stroke-width="1.2" fill="none"/><path d="M692.5 365.0 L697.0 369.5" stroke="#2a2b32" stroke-width="1.3" fill="none"/><path d="M855.5 368.7 L863.0 364.2" stroke="#2a2b32" stroke-width="1.3" fill="none"/><path d="M320.2 425.0L381.0 428.0L382.5 479.0L511.5 483.5L518.5 656.0L386.7 651.5Z" fill="#f7f7f0" stroke="#2a2b32" stroke-width="1.568" stroke-linejoin="round" /><path d="M511.2 484.0L515.2 484.0L520.2 655.5L516.5 656.0Z" fill="#2a2b32" stroke="#2a2b32" stroke-width="0.896" stroke-linejoin="round" /><path d="M381.0 428.0 L382.5 479.0" stroke="#2a2b32" stroke-width="2" fill="none"/><path d="M402.0 477.5L460.5 462.5L480.0 467.7L548.2 478.2L549.0 480.5L547.5 484.2L480.0 480.5L382.5 479.3L385.5 477.5Z" fill="#55536d" stroke="#2a2b32" stroke-width="1.568" stroke-linejoin="round" /><path d="M480.0 472.5 L548.5 481.0" stroke="#2a2b32" stroke-width="1" fill="none"/><path d="M402.0 477.5 L480.0 476.0" stroke="#2a2b32" stroke-width="0.9" fill="none"/><path d="M382.5 479.6 L512.0 484.0" stroke="#2a2b32" stroke-width="2.2" fill="none"/><path d="M575.5 468.5C586.2 467.1 619.2 462.1 640.0 459.8C660.8 457.5 683.3 455.9 700.0 454.5C716.7 453.1 723.3 452.4 740.0 451.5C756.7 450.6 781.7 449.1 800.0 449.0C818.3 448.9 835.0 449.9 850.0 451.0C865.0 452.1 873.8 453.0 890.0 455.7C906.2 458.4 934.5 464.1 947.0 467.0C959.5 469.9 959.2 470.5 965.0 473.0C970.8 475.5 977.3 479.2 982.0 482.0C986.7 484.8 990.6 488.8 993.0 490.0C995.4 491.2 995.9 489.2 996.5 489.0L995.0 490.0C994.7 490.5 995.2 494.0 993.0 493.2C990.8 492.4 986.7 488.0 982.0 485.2C977.3 482.4 970.8 478.7 965.0 476.2C959.2 473.7 959.5 473.1 947.0 470.2C934.5 467.3 906.2 461.6 890.0 458.9C873.8 456.2 865.0 455.3 850.0 454.2C835.0 453.1 818.3 452.1 800.0 452.2C781.7 452.3 756.7 453.8 740.0 454.7C723.3 455.6 716.7 456.3 700.0 457.7C683.3 459.1 660.8 460.7 640.0 463.0C619.2 465.3 586.2 470.2 575.5 471.7Z" fill="#ecece6" stroke="#2a2b32" stroke-width="1.232" stroke-linejoin="round" /><path d="M576.0 464.0C586.7 462.5 619.3 457.4 640.0 455.0C660.7 452.6 683.3 451.0 700.0 449.5C716.7 448.0 723.3 447.1 740.0 446.0C756.7 444.9 781.7 443.2 800.0 443.0C818.3 442.8 835.0 444.0 850.0 445.0C865.0 446.0 873.8 446.5 890.0 449.0C906.2 451.5 934.5 457.4 947.0 460.2C959.5 463.0 959.1 463.6 965.0 466.0C970.9 468.4 977.7 471.5 982.5 474.5C987.3 477.5 991.7 481.6 994.0 484.0C996.3 486.4 996.1 488.2 996.5 489.0L996.5 489.0C995.9 489.2 995.4 491.2 993.0 490.0C990.6 488.8 986.7 484.8 982.0 482.0C977.3 479.2 970.8 475.5 965.0 473.0C959.2 470.5 959.5 469.9 947.0 467.0C934.5 464.1 906.2 458.4 890.0 455.7C873.8 453.0 865.0 452.1 850.0 451.0C835.0 449.9 818.3 448.9 800.0 449.0C781.7 449.1 756.7 450.6 740.0 451.5C723.3 452.4 716.7 453.1 700.0 454.5C683.3 455.9 660.8 457.5 640.0 459.8C619.2 462.1 586.2 467.1 575.5 468.5Z" fill="#4e4c66" stroke="#2a2b32" stroke-width="1.344" stroke-linejoin="round" /><path d="M483.0 455.0L576.0 464.0L575.5 468.5L483.7 460.5Z" fill="#4e4c66" stroke="#2a2b32" stroke-width="1.344" stroke-linejoin="round" /><path d="M956.2 573.6C964.3 572.5 988.8 569.4 1005.0 567.0C1021.2 564.6 1038.8 561.8 1053.7 559.0C1068.6 556.2 1084.7 552.4 1094.4 550.0C1104.2 547.6 1109.2 545.3 1112.2 544.4L1116.0 546.0C1113.8 547.0 1110.2 549.0 1102.5 551.7C1094.8 554.4 1086.2 558.7 1070.0 562.2C1053.8 565.8 1023.4 570.0 1005.0 573.0C986.6 576.0 967.1 578.8 959.5 580.0Z" fill="#4e4c66" stroke="#2a2b32" stroke-width="1.344" stroke-linejoin="round" /><path d="M483.0 454.5C489.2 453.2 507.3 449.4 520.0 447.0C532.7 444.6 541.8 442.6 559.3 440.0C576.8 437.4 602.8 433.7 625.0 431.7C647.2 429.7 673.3 428.9 692.5 428.0C711.7 427.1 722.1 426.9 740.0 426.5C757.9 426.1 779.5 425.2 800.0 425.5C820.5 425.8 843.0 426.8 863.0 428.0C883.0 429.2 903.8 430.8 920.0 432.5C936.2 434.2 945.8 436.2 960.0 438.0C974.2 439.8 989.0 440.9 1005.0 443.5C1021.0 446.1 1043.5 450.6 1056.0 453.5C1068.5 456.4 1072.5 458.5 1080.0 461.0C1087.5 463.5 1097.5 467.2 1101.0 468.5L1101.0 468.5L1099.5 472.2L1071.7 531.5L1065.0 539.0L1110.0 549.5L1112.2 544.4C1109.2 545.3 1104.2 547.6 1094.4 550.0C1084.7 552.4 1068.6 556.2 1053.7 559.0C1038.8 561.8 1021.2 564.6 1005.0 567.0C988.8 569.4 964.3 572.5 956.2 573.6L820.0 537.7C822.0 537.5 825.3 537.4 832.0 536.7C838.7 536.0 849.5 535.0 860.0 533.5C870.5 532.0 881.7 530.5 895.0 528.0C908.3 525.5 926.2 522.0 940.0 518.2C953.8 514.5 968.7 509.4 977.5 505.5C986.3 501.6 989.8 497.8 993.0 495.0C996.2 492.2 996.3 490.8 996.5 489.0C996.7 487.2 996.3 486.4 994.0 484.0C991.7 481.6 987.3 477.5 982.5 474.5C977.7 471.5 970.9 468.4 965.0 466.0C959.1 463.6 959.5 463.0 947.0 460.2C934.5 457.4 906.2 451.5 890.0 449.0C873.8 446.5 865.0 446.0 850.0 445.0C835.0 444.0 818.3 442.8 800.0 443.0C781.7 443.2 756.7 444.9 740.0 446.0C723.3 447.1 716.7 448.0 700.0 449.5C683.3 451.0 660.7 452.6 640.0 455.0C619.3 457.4 586.7 462.5 576.0 464.0L483.0 455.0Z" fill="#55536d" stroke="#2a2b32" stroke-width="1.568" stroke-linejoin="round" /><path d="M947.0 460.2C952.5 459.1 968.1 455.8 980.0 453.5C991.9 451.2 1012.1 447.7 1018.5 446.5" fill="none" stroke="#2a2b32" stroke-width="1.232" stroke-linejoin="round" /><path d="M571.0 463.5 L575.5 468.5" stroke="#2a2b32" stroke-width="1" fill="none"/><path d="M1026.0 534.5L1074.0 518.0L1072.0 525.0L1042.0 537.5Z" fill="#4e4c66" stroke="#2a2b32" stroke-width="1.344" stroke-linejoin="round" /><path d="M1042.0 537.5L1069.0 527.5L1071.7 531.5L1062.0 541.5Z" fill="#f7f7f0" stroke="#2a2b32" stroke-width="1.12" stroke-linejoin="round" /><path d="M959.5 580.0C967.1 578.8 986.6 576.0 1005.0 573.0C1023.4 570.0 1053.8 565.8 1070.0 562.2C1086.2 558.7 1094.8 554.4 1102.5 551.7C1110.2 549.0 1113.8 547.0 1116.0 546.0L1150.0 548.0L1184.0 500.8L1170.7 565.5L1169.0 569.5L1046.4 592.3L1020.0 730.0L981.0 716.0L979.8 603.0L956.0 603.0L956.2 580.0Z" fill="#f7f7f0" stroke="#2a2b32" stroke-width="1.344" stroke-linejoin="round" /><path d="M979.8 582.0 L979.8 716.0" stroke="#2a2b32" stroke-width="1.2" fill="none"/><path d="M1072.4 575.2C1078.7 573.7 1097.1 570.0 1110.0 566.0C1122.9 562.0 1143.0 553.4 1149.6 550.9" fill="none" stroke="#2a2b32" stroke-width="1.232" stroke-linejoin="round" /><path d="M1072.4 579.3C1078.7 577.8 1097.1 574.0 1110.0 570.0C1122.9 566.0 1143.0 557.5 1149.6 555.0" fill="none" stroke="#2a2b32" stroke-width="1.232" stroke-linejoin="round" /><path d="M1068.4 562.5L1072.4 561.8L1069.5 585.0L1065.5 585.8Z" fill="#f7f7f0" stroke="#2a2b32" stroke-width="1.232" stroke-linejoin="round" /><path d="M1151.2 550.9 L1146.4 573.6" stroke="#2a2b32" stroke-width="1.4" fill="none"/><path d="M947.0 653.0L997.0 642.4L1034.0 653.0L1030.0 664.0L945.0 677.0L943.0 680.0Z" fill="#f7f7f0" stroke="#2a2b32" stroke-width="1.344" stroke-linejoin="round" /><path d="M946.0 675.0C953.3 674.0 975.8 671.2 990.0 669.0C1004.2 666.8 1024.2 662.8 1031.0 661.5" fill="none" stroke="#2a2b32" stroke-width="1.12" stroke-linejoin="round" /><path d="M1104.0 466.0L1175.0 468.5L1192.0 476.0L1184.0 501.0L1170.7 565.5L1150.0 549.0L1116.0 546.0L1110.0 549.5Z" fill="#f7f7f0" stroke="none" stroke-width="0" stroke-linejoin="round" /><path d="M1160.0 465.0L1194.5 471.0C1194.8 472.5 1197.4 476.1 1196.5 480.0C1195.6 483.9 1194.4 489.7 1189.0 494.5C1183.6 499.3 1168.2 506.6 1164.0 509.0L1158.0 500.0Z" fill="#55536d" stroke="#2a2b32" stroke-width="1.568" stroke-linejoin="round" /><path d="M1169.0 439.6L1203.0 438.7L1193.5 470.0L1158.0 464.0Z" fill="#f7f7f0" stroke="#2a2b32" stroke-width="1.568" stroke-linejoin="round" /><path d="M1164.0 509.0L1184.0 500.8L1170.7 565.5L1151.2 551.0Z" fill="#f7f7f0" stroke="#2a2b32" stroke-width="1.344" stroke-linejoin="round" /><path d="M1155.0 489.5L1119.0 545.0L1144.5 551.0Z" fill="#f7f7f0" stroke="#2a2b32" stroke-width="1.456" stroke-linejoin="round" /><path d="M1158.0 485.0L1168.5 480.5L1155.0 548.0L1146.0 548.0Z" fill="#b4b4b4" stroke="#2a2b32" stroke-width="1.456" stroke-linejoin="round" /><path d="M1071.7 531.5L1065.0 539.0L1110.0 549.5L1114.5 543.5Z" fill="#4e4c66" stroke="#2a2b32" stroke-width="1.344" stroke-linejoin="round" /><path d="M1099.5 472.2L1161.0 477.5L1114.5 543.5L1071.7 531.5Z" fill="#55536d" stroke="#2a2b32" stroke-width="1.568" stroke-linejoin="round" /><path d="M1099.5 472.2L1104.0 466.2L1173.0 468.5L1170.0 477.5L1161.0 477.5Z" fill="#55536d" stroke="#2a2b32" stroke-width="1.456" stroke-linejoin="round" /><path d="M1160.0 467.8 L1158.0 477.2" stroke="#2a2b32" stroke-width="1" fill="none"/><path d="M1166.0 468.2 L1164.0 477.4" stroke="#2a2b32" stroke-width="1" fill="none"/><path d="M1076.0 524.0 L1118.0 536.5" stroke="#2a2b32" stroke-width="1" fill="none"/><path d="M955.0 573.7L959.5 576.0L928.0 758.0L922.0 759.0Z" fill="#f7f7f0" stroke="#2a2b32" stroke-width="1.344" stroke-linejoin="round" /><path d="M820.0 537.7L955.0 573.7L922.0 759.0L823.0 726.0Z" fill="#f7f7f0" stroke="#2a2b32" stroke-width="1.568" stroke-linejoin="round" /><path d="M1046.5 592.0C1056.0 590.3 1082.9 585.3 1103.3 581.6C1123.7 577.9 1153.3 572.8 1168.8 569.6C1184.3 566.5 1188.8 566.2 1196.3 562.7C1203.8 559.2 1207.3 556.4 1213.6 548.9C1219.9 541.4 1227.9 527.4 1234.2 517.9C1240.5 508.4 1247.2 497.3 1251.5 492.0C1255.8 486.7 1258.6 487.2 1260.0 486.2L1254.9 517.9L1274.5 502.4C1273.0 510.1 1269.6 529.7 1265.2 548.9C1260.8 568.1 1253.7 597.1 1248.0 617.8C1242.3 638.5 1236.0 658.5 1230.8 672.9C1225.6 687.2 1219.3 698.7 1217.0 703.9C1213.0 707.4 1203.2 717.7 1192.9 724.6C1182.6 731.5 1169.9 739.2 1155.0 745.2C1140.1 751.2 1120.5 756.4 1103.3 760.7C1086.1 765.0 1066.6 768.7 1051.7 771.0C1036.8 773.3 1020.1 773.9 1013.8 774.5Z" fill="#f4a45f" stroke="#2a2b32" stroke-width="2.016" stroke-linejoin="round" /></g></svg>
</body></html>
